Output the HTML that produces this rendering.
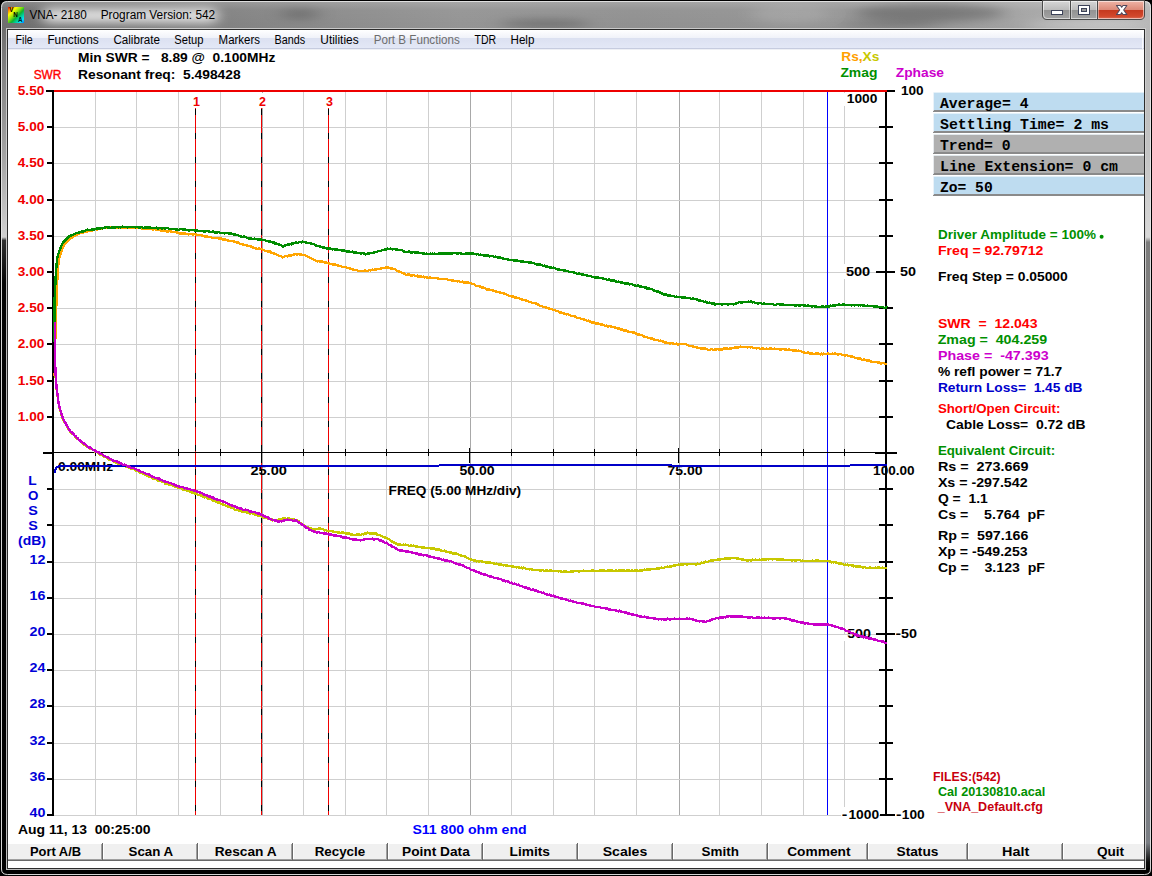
<!DOCTYPE html>
<html lang="en"><head><meta charset="utf-8"><title>VNA- 2180   Program Version: 542</title>
<style>
html,body{margin:0;padding:0;background:#000;}
body{width:1152px;height:876px;overflow:hidden;font-family:"Liberation Sans",Arial,sans-serif;}
svg{display:block}
text{font-family:"Liberation Sans",Arial,sans-serif;white-space:pre;}
.mono{font-family:"Liberation Mono","Courier New",monospace;}
</style></head><body>
<svg width="1152" height="876" viewBox="0 0 1152 876">
<defs>
<linearGradient id="gTitle" x1="0" y1="0" x2="1" y2="0">
<stop offset="0" stop-color="#6e6e6e"/><stop offset="0.10" stop-color="#767676"/><stop offset="0.20" stop-color="#828282"/>
<stop offset="0.30" stop-color="#8c8c8c"/><stop offset="0.40" stop-color="#949494"/><stop offset="0.55" stop-color="#909090"/>
<stop offset="0.70" stop-color="#949494"/><stop offset="0.82" stop-color="#989898"/><stop offset="0.90" stop-color="#a6a6a6"/><stop offset="0.96" stop-color="#b2b2b2"/><stop offset="1" stop-color="#b6b6b6"/>
</linearGradient>
<linearGradient id="gTitleV" x1="0" y1="0" x2="0" y2="1">
<stop offset="0" stop-color="#fff" stop-opacity="0.18"/><stop offset="0.3" stop-color="#fff" stop-opacity="0.04"/><stop offset="1" stop-color="#fff" stop-opacity="0"/>
</linearGradient>
<linearGradient id="gMenu" x1="0" y1="0" x2="0" y2="1">
<stop offset="0" stop-color="#ffffff"/><stop offset="0.40" stop-color="#f0f2f9"/><stop offset="0.42" stop-color="#dce1f1"/><stop offset="0.9" stop-color="#e3e8f6"/><stop offset="0.91" stop-color="#c6ccdf"/><stop offset="0.95" stop-color="#c6ccdf"/><stop offset="0.96" stop-color="#eef0f5"/><stop offset="1" stop-color="#eef0f5"/>
</linearGradient>
<linearGradient id="gIcon" x1="0" y1="0" x2="1" y2="1">
<stop offset="0" stop-color="#ff0000"/><stop offset="0.12" stop-color="#ff8000"/><stop offset="0.27" stop-color="#ffff00"/><stop offset="0.45" stop-color="#80e010"/><stop offset="0.58" stop-color="#10b030"/><stop offset="0.72" stop-color="#00d0a0"/><stop offset="0.86" stop-color="#00e8ff"/><stop offset="1" stop-color="#0070ff"/>
</linearGradient>
<linearGradient id="gBtnT" x1="0" y1="0" x2="0" y2="1">
<stop offset="0" stop-color="#d8d8d8"/><stop offset="0.48" stop-color="#bcbcbc"/><stop offset="0.5" stop-color="#929292"/><stop offset="1" stop-color="#a4a4a4"/>
</linearGradient>
<linearGradient id="gBtnC" x1="0" y1="0" x2="0" y2="1">
<stop offset="0" stop-color="#eeb4a6"/><stop offset="0.48" stop-color="#dc8a78"/><stop offset="0.5" stop-color="#c4381e"/><stop offset="0.85" stop-color="#d2482c"/><stop offset="1" stop-color="#d8705a"/>
</linearGradient>
<linearGradient id="gLeftF" x1="0" y1="0" x2="0" y2="1">
<stop offset="0" stop-color="#6e6e6e"/><stop offset="0.06" stop-color="#868686"/><stop offset="0.15" stop-color="#a4a4a4"/><stop offset="0.246" stop-color="#d0d0d0"/><stop offset="0.250" stop-color="#303030"/><stop offset="0.30" stop-color="#050505"/><stop offset="1" stop-color="#000"/>
</linearGradient>
<linearGradient id="gRightF" x1="0" y1="0" x2="0" y2="1">
<stop offset="0" stop-color="#b6b6b6"/><stop offset="0.15" stop-color="#c4c4c4"/><stop offset="0.246" stop-color="#d8d8d8"/><stop offset="0.252" stop-color="#7c7c7c"/><stop offset="0.6" stop-color="#848484"/><stop offset="0.962" stop-color="#7a7e84"/><stop offset="0.985" stop-color="#0c0c0c"/><stop offset="1" stop-color="#000"/>
</linearGradient>
<filter id="fGlow" x="-20%" y="-150%" width="140%" height="400%"><feGaussianBlur stdDeviation="6.5 5"/></filter>
<filter id="fBlur" x="-30%" y="-100%" width="160%" height="300%"><feGaussianBlur stdDeviation="9 4"/></filter>
<clipPath id="clipPlot"><rect x="53.0" y="90.0" width="834.5" height="726.0"/></clipPath>
</defs>

<rect x="0" y="0" width="1152" height="876" fill="#000"/>
<clipPath id="clipWin"><path d="M1 869 V7 Q1 1 7 1 H1145 Q1151 1 1151 7 V869 Q1151 875 1145 875 H7 Q1 875 1 869 Z"/></clipPath>
<g clip-path="url(#clipWin)">
<rect x="0" y="0" width="1152" height="876" fill="url(#gTitle)"/>
<rect x="2" y="2" width="1148" height="27" fill="url(#gTitleV)"/>
<g filter="url(#fBlur)"><ellipse cx="930" cy="13" rx="75" ry="9" fill="#000" opacity="0.22"/><ellipse cx="545" cy="24" rx="45" ry="4" fill="#000" opacity="0.25"/><ellipse cx="890" cy="25" rx="50" ry="3" fill="#000" opacity="0.22"/><ellipse cx="300" cy="14" rx="20" ry="5" fill="#000" opacity="0.2"/><ellipse cx="1085" cy="25" rx="60" ry="4" fill="#fff" opacity="0.3"/><ellipse cx="790" cy="14" rx="40" ry="10" fill="#fff" opacity="0.12"/></g>
<rect x="1" y="29" width="7" height="846" fill="url(#gLeftF)"/>
<rect x="1144" y="29" width="7" height="846" fill="url(#gRightF)"/>
<rect x="2" y="868" width="1148" height="7" fill="#000"/>
</g>
<path d="M1.5 869 V7.5 Q1.5 1.5 7.5 1.5 H1144.5 Q1150.5 1.5 1150.5 7.5 V869 Q1150.5 874.5 1144.5 874.5 H7.5 Q1.5 874.5 1.5 869 Z" fill="none" stroke="#e6e6e6" stroke-width="1" opacity="0.92"/>
<rect x="6.5" y="28.5" width="1139" height="841" fill="none" stroke="#d0d0d0" stroke-width="1" opacity="0.9"/>
<rect x="7.5" y="29.5" width="1137" height="839" fill="#fff" stroke="#2c2c2c" stroke-width="1"/>
<rect x="8" y="7" width="16" height="16" fill="url(#gIcon)"/>
<text x="9.2" y="12.4" font-size="6.3" font-weight="bold" fill="#000">V</text><text x="13.2" y="17.2" font-size="6.3" font-weight="bold" fill="#000">N</text><text x="18" y="22" font-size="6.3" font-weight="bold" fill="#001828">A</text>
<rect x="42" y="8" width="176" height="15" rx="7" fill="#fff" opacity="0.74" filter="url(#fGlow)"/>
<text y="18.5" font-size="12" fill="#000" xml:space="preserve"><tspan x="29.5" textLength="57.3" lengthAdjust="spacingAndGlyphs">VNA- 2180</tspan><tspan x="100.7" textLength="114.5" lengthAdjust="spacingAndGlyphs">Program Version: 542</tspan></text>
<path d="M1042.5 0.5 H1144.5 V15 Q1144.5 19.5 1140 19.5 H1047 Q1042.5 19.5 1042.5 15 Z" fill="url(#gBtnT)" stroke="#4a4a4a" stroke-width="1"/>
<path d="M1097.5 1 H1144 V15 Q1144 19 1140 19 H1097.5 Z" fill="url(#gBtnC)"/>
<path d="M1043.5 1.5 H1143.5 V15 Q1143.5 18.5 1140 18.5 H1047 Q1043.5 18.5 1043.5 15 Z" fill="none" stroke="#fff" stroke-opacity="0.55" stroke-width="1"/>
<path d="M1070.5 1 V19 M1097.5 1 V19" stroke="#4a4a4a" stroke-width="1"/>
<path d="M1071.5 1.5 V18.5 M1098.5 1.5 V18.5 M1069.5 1.5 V18.5 M1096.5 1.5 V18.5" stroke="#fff" stroke-opacity="0.4" stroke-width="1"/>
<rect x="1051.5" y="10.5" width="11" height="4" fill="#fff" stroke="#3c4258" stroke-width="1"/>
<rect x="1078.5" y="5.5" width="11" height="9" fill="#fff" stroke="#3c4258" stroke-width="1"/><rect x="1081.5" y="8.5" width="5" height="3" fill="#9a9a9a" stroke="#3c4258" stroke-width="1"/>
<path d="M1116.5 5.5 H1120.4 L1121.7 7.3 L1123 5.5 H1126.9 L1123.7 10 L1126.9 14.5 H1123 L1121.7 12.7 L1120.4 14.5 H1116.5 L1119.7 10 Z" fill="#fff" stroke="#50485c" stroke-width="1.1" stroke-linejoin="round"/>
<rect x="8" y="30" width="1136" height="20" fill="url(#gMenu)"/>
<rect x="1142" y="30" width="1" height="19" fill="#fff" opacity="0.8"/>
<text x="15.6" y="43.6" fill="#000" font-size="12" textLength="17.1" lengthAdjust="spacingAndGlyphs" xml:space="preserve">File</text>
<text x="47.4" y="43.6" fill="#000" font-size="12" textLength="51.3" lengthAdjust="spacingAndGlyphs" xml:space="preserve">Functions</text>
<text x="113.4" y="43.6" fill="#000" font-size="12" textLength="46.6" lengthAdjust="spacingAndGlyphs" xml:space="preserve">Calibrate</text>
<text x="174.3" y="43.6" fill="#000" font-size="12" textLength="29.2" lengthAdjust="spacingAndGlyphs" xml:space="preserve">Setup</text>
<text x="218.6" y="43.6" fill="#000" font-size="12" textLength="41.4" lengthAdjust="spacingAndGlyphs" xml:space="preserve">Markers</text>
<text x="274.6" y="43.6" fill="#000" font-size="12" textLength="30.6" lengthAdjust="spacingAndGlyphs" xml:space="preserve">Bands</text>
<text x="320.3" y="43.6" fill="#000" font-size="12" textLength="38.3" lengthAdjust="spacingAndGlyphs" xml:space="preserve">Utilities</text>
<text x="373.7" y="43.6" fill="#6d6d6d" font-size="12" textLength="86.1" lengthAdjust="spacingAndGlyphs" xml:space="preserve">Port B Functions</text>
<text x="474.5" y="43.6" fill="#000" font-size="12" textLength="21.6" lengthAdjust="spacingAndGlyphs" xml:space="preserve">TDR</text>
<text x="510.5" y="43.6" fill="#000" font-size="12" textLength="23.9" lengthAdjust="spacingAndGlyphs" xml:space="preserve">Help</text>
<text x="78.0" y="62.0" fill="#000" font-size="12" font-weight="bold" textLength="197.3" lengthAdjust="spacingAndGlyphs" xml:space="preserve">Min SWR =   8.89 @  0.100MHz</text>
<text x="78.0" y="79.0" fill="#000" font-size="12" font-weight="bold" textLength="162.6" lengthAdjust="spacingAndGlyphs" xml:space="preserve">Resonant freq:  5.498428</text>
<text x="33.7" y="79.0" fill="#f00" font-size="12" textLength="27.7" lengthAdjust="spacingAndGlyphs" xml:space="preserve" stroke="#f00" stroke-width="0.35">SWR</text>
<text x="841.3" y="61" font-size="12" font-weight="bold" textLength="38.1" lengthAdjust="spacingAndGlyphs"><tspan fill="#ffa000">Rs,</tspan><tspan fill="#c8c800">Xs</tspan></text>
<text x="840.4" y="77.0" fill="#009000" font-size="12" font-weight="bold" textLength="37.0" lengthAdjust="spacingAndGlyphs" xml:space="preserve">Zmag</text>
<text x="895.8" y="77.0" fill="#cc00cc" font-size="12" font-weight="bold" textLength="48.2" lengthAdjust="spacingAndGlyphs" xml:space="preserve">Zphase</text>
<g shape-rendering="crispEdges"><path d="M95.5 92.0 V815.0" stroke="#cfcfcf" stroke-width="1"/><path d="M136.5 92.0 V815.0" stroke="#cfcfcf" stroke-width="1"/><path d="M178.5 92.0 V815.0" stroke="#cfcfcf" stroke-width="1"/><path d="M220.5 92.0 V815.0" stroke="#cfcfcf" stroke-width="1"/><path d="M262.5 92.0 V815.0" stroke="#a8a8a8" stroke-width="1"/><path d="M303.5 92.0 V815.0" stroke="#cfcfcf" stroke-width="1"/><path d="M345.5 92.0 V815.0" stroke="#cfcfcf" stroke-width="1"/><path d="M386.5 92.0 V815.0" stroke="#cfcfcf" stroke-width="1"/><path d="M428.5 92.0 V815.0" stroke="#cfcfcf" stroke-width="1"/><path d="M470.5 92.0 V815.0" stroke="#a8a8a8" stroke-width="1"/><path d="M511.5 92.0 V815.0" stroke="#cfcfcf" stroke-width="1"/><path d="M553.5 92.0 V815.0" stroke="#cfcfcf" stroke-width="1"/><path d="M594.5 92.0 V815.0" stroke="#cfcfcf" stroke-width="1"/><path d="M636.5 92.0 V815.0" stroke="#cfcfcf" stroke-width="1"/><path d="M679.5 92.0 V815.0" stroke="#a8a8a8" stroke-width="1"/><path d="M719.5 92.0 V815.0" stroke="#cfcfcf" stroke-width="1"/><path d="M761.5 92.0 V815.0" stroke="#cfcfcf" stroke-width="1"/><path d="M803.5 92.0 V815.0" stroke="#cfcfcf" stroke-width="1"/><path d="M844.5 92.0 V815.0" stroke="#cfcfcf" stroke-width="1"/><rect x="843" y="93" width="36" height="13" fill="#fff"/><rect x="843" y="264" width="30" height="15" fill="#fff"/><rect x="843" y="635" width="30" height="6" fill="#fff"/><path d="M54.0 127.5 H885.0" stroke="#cfcfcf" stroke-width="1"/><path d="M54.0 163.5 H885.0" stroke="#cfcfcf" stroke-width="1"/><path d="M54.0 200.5 H885.0" stroke="#cfcfcf" stroke-width="1"/><path d="M54.0 236.5 H885.0" stroke="#cfcfcf" stroke-width="1"/><path d="M54.0 272.5 H885.0" stroke="#cfcfcf" stroke-width="1"/><path d="M54.0 308.5 H885.0" stroke="#cfcfcf" stroke-width="1"/><path d="M54.0 344.5 H885.0" stroke="#cfcfcf" stroke-width="1"/><path d="M54.0 381.5 H885.0" stroke="#cfcfcf" stroke-width="1"/><path d="M54.0 417.5 H885.0" stroke="#cfcfcf" stroke-width="1"/><path d="M54.0 489.5 H885.0" stroke="#cfcfcf" stroke-width="1"/><path d="M54.0 525.5 H885.0" stroke="#cfcfcf" stroke-width="1"/><path d="M54.0 562.5 H885.0" stroke="#cfcfcf" stroke-width="1"/><path d="M54.0 598.5 H885.0" stroke="#cfcfcf" stroke-width="1"/><path d="M54.0 634.5 H885.0" stroke="#cfcfcf" stroke-width="1"/><path d="M54.0 670.5 H885.0" stroke="#cfcfcf" stroke-width="1"/><path d="M54.0 706.5 H885.0" stroke="#cfcfcf" stroke-width="1"/><path d="M54.0 743.5 H885.0" stroke="#cfcfcf" stroke-width="1"/><path d="M54.0 779.5 H885.0" stroke="#cfcfcf" stroke-width="1"/><path d="M54.0 815.5 H885.0" stroke="#cfcfcf" stroke-width="1"/></g>
<rect x="841" y="807" width="38" height="9" fill="#fff" shape-rendering="crispEdges"/>
<text x="58.1" y="471.0" fill="#000" font-size="12" font-weight="bold" textLength="55.0" lengthAdjust="spacingAndGlyphs" xml:space="preserve">0.00MHz</text>
<text x="250.4" y="475.0" fill="#000" font-size="12" font-weight="bold" textLength="36.5" lengthAdjust="spacingAndGlyphs" xml:space="preserve">25.00</text>
<text x="459.4" y="475.0" fill="#000" font-size="12" font-weight="bold" textLength="35.2" lengthAdjust="spacingAndGlyphs" xml:space="preserve">50.00</text>
<text x="667.5" y="475.0" fill="#000" font-size="12" font-weight="bold" textLength="35.1" lengthAdjust="spacingAndGlyphs" xml:space="preserve">75.00</text>
<text x="873.1" y="475.0" fill="#000" font-size="12" font-weight="bold" textLength="41.5" lengthAdjust="spacingAndGlyphs" xml:space="preserve">100.00</text>
<text x="388.6" y="495.0" fill="#000" font-size="12" font-weight="bold" textLength="132.5" lengthAdjust="spacingAndGlyphs" xml:space="preserve">FREQ (5.00 MHz/div)</text>
<rect x="257" y="93" width="12" height="15" fill="#fff"/>
<g shape-rendering="crispEdges"><path d="M195.5 108 V815.0" stroke="#f00000" stroke-width="1"/><path d="M195.5 109 V815.0" stroke="#000" stroke-width="1" stroke-dasharray="6 18"/><path d="M261.5 108 V815.0" stroke="#f00000" stroke-width="1"/><path d="M261.5 109 V815.0" stroke="#000" stroke-width="1" stroke-dasharray="6 18"/><path d="M328.5 108 V815.0" stroke="#f00000" stroke-width="1"/><path d="M328.5 109 V815.0" stroke="#000" stroke-width="1" stroke-dasharray="6 18"/></g>
<text x="196.5" y="106.0" fill="#f00000" font-size="12.5" font-weight="bold" text-anchor="middle" xml:space="preserve">1</text>
<text x="262.5" y="106.0" fill="#f00000" font-size="12.5" font-weight="bold" text-anchor="middle" xml:space="preserve">2</text>
<text x="329.5" y="106.0" fill="#f00000" font-size="12.5" font-weight="bold" text-anchor="middle" xml:space="preserve">3</text>
<rect x="261" y="451" width="1" height="12" fill="#00e0f0" shape-rendering="crispEdges"/>
<rect x="195" y="452" width="1" height="1" fill="#00e0f0"/><rect x="328" y="452" width="1" height="1" fill="#00e0f0"/>
<rect x="827" y="92" width="1" height="723.0" fill="#0000ff" shape-rendering="crispEdges"/>
<g shape-rendering="crispEdges"><rect x="52" y="90" width="2" height="726.0" fill="#000"/><rect x="885" y="90" width="2" height="726.0" fill="#000"/><rect x="46" y="90" width="8" height="2" fill="#000"/><rect x="887" y="90" width="8" height="2" fill="#000"/><rect x="54" y="90" width="833" height="2" fill="#ee0000"/><rect x="47" y="126" width="6" height="2" fill="#000"/><rect x="47" y="162" width="6" height="2" fill="#000"/><rect x="47" y="199" width="6" height="2" fill="#000"/><rect x="47" y="235" width="6" height="2" fill="#000"/><rect x="47" y="271" width="6" height="2" fill="#000"/><rect x="47" y="307" width="6" height="2" fill="#000"/><rect x="47" y="343" width="6" height="2" fill="#000"/><rect x="47" y="380" width="6" height="2" fill="#000"/><rect x="47" y="416" width="6" height="2" fill="#000"/><rect x="47" y="488" width="6" height="2" fill="#000"/><rect x="47" y="524" width="6" height="2" fill="#000"/><rect x="47" y="561" width="6" height="2" fill="#000"/><rect x="47" y="597" width="6" height="2" fill="#000"/><rect x="47" y="633" width="6" height="2" fill="#000"/><rect x="47" y="669" width="6" height="2" fill="#000"/><rect x="47" y="705" width="6" height="2" fill="#000"/><rect x="47" y="742" width="6" height="2" fill="#000"/><rect x="47" y="778" width="6" height="2" fill="#000"/><rect x="47" y="814" width="6" height="2" fill="#000"/><rect x="879" y="126" width="14" height="2" fill="#000"/><rect x="879" y="162" width="14" height="2" fill="#000"/><rect x="879" y="199" width="14" height="2" fill="#000"/><rect x="879" y="235" width="14" height="2" fill="#000"/><rect x="876" y="271" width="19" height="2" fill="#000"/><rect x="879" y="307" width="14" height="2" fill="#000"/><rect x="879" y="343" width="14" height="2" fill="#000"/><rect x="879" y="380" width="14" height="2" fill="#000"/><rect x="879" y="416" width="14" height="2" fill="#000"/><rect x="879" y="452" width="14" height="2" fill="#000"/><rect x="879" y="488" width="14" height="2" fill="#000"/><rect x="879" y="524" width="14" height="2" fill="#000"/><rect x="879" y="561" width="14" height="2" fill="#000"/><rect x="879" y="597" width="14" height="2" fill="#000"/><rect x="876" y="633" width="19" height="2" fill="#000"/><rect x="879" y="669" width="14" height="2" fill="#000"/><rect x="879" y="705" width="14" height="2" fill="#000"/><rect x="879" y="742" width="14" height="2" fill="#000"/><rect x="879" y="778" width="14" height="2" fill="#000"/><rect x="880" y="814" width="15" height="2" fill="#000"/><rect x="43" y="452" width="854" height="1" fill="#000"/><rect x="43" y="452" width="10" height="2" fill="#000"/><rect x="875" y="452" width="22" height="2" fill="#000"/><rect x="95" y="449" width="1" height="7" fill="#000"/><rect x="136" y="449" width="1" height="7" fill="#000"/><rect x="178" y="449" width="1" height="7" fill="#000"/><rect x="220" y="449" width="1" height="7" fill="#000"/><rect x="261" y="448" width="1" height="15" fill="#000"/><rect x="303" y="449" width="1" height="7" fill="#000"/><rect x="345" y="449" width="1" height="7" fill="#000"/><rect x="386" y="449" width="1" height="7" fill="#000"/><rect x="428" y="449" width="1" height="7" fill="#000"/><rect x="469" y="448" width="1" height="15" fill="#000"/><rect x="511" y="449" width="1" height="7" fill="#000"/><rect x="553" y="449" width="1" height="7" fill="#000"/><rect x="594" y="449" width="1" height="7" fill="#000"/><rect x="636" y="449" width="1" height="7" fill="#000"/><rect x="678" y="448" width="1" height="15" fill="#000"/><rect x="719" y="449" width="1" height="7" fill="#000"/><rect x="761" y="449" width="1" height="7" fill="#000"/><rect x="803" y="449" width="1" height="7" fill="#000"/><rect x="844" y="449" width="1" height="7" fill="#000"/></g>
<text x="17.8" y="95.0" fill="#f00000" font-size="12" font-weight="bold" textLength="26.5" lengthAdjust="spacingAndGlyphs" xml:space="preserve">5.50</text>
<text x="17.8" y="131.0" fill="#f00000" font-size="12" font-weight="bold" textLength="26.5" lengthAdjust="spacingAndGlyphs" xml:space="preserve">5.00</text>
<text x="17.8" y="167.0" fill="#f00000" font-size="12" font-weight="bold" textLength="26.5" lengthAdjust="spacingAndGlyphs" xml:space="preserve">4.50</text>
<text x="17.8" y="204.0" fill="#f00000" font-size="12" font-weight="bold" textLength="26.5" lengthAdjust="spacingAndGlyphs" xml:space="preserve">4.00</text>
<text x="17.8" y="240.0" fill="#f00000" font-size="12" font-weight="bold" textLength="26.5" lengthAdjust="spacingAndGlyphs" xml:space="preserve">3.50</text>
<text x="17.8" y="276.0" fill="#f00000" font-size="12" font-weight="bold" textLength="26.5" lengthAdjust="spacingAndGlyphs" xml:space="preserve">3.00</text>
<text x="17.8" y="312.0" fill="#f00000" font-size="12" font-weight="bold" textLength="26.5" lengthAdjust="spacingAndGlyphs" xml:space="preserve">2.50</text>
<text x="17.8" y="348.0" fill="#f00000" font-size="12" font-weight="bold" textLength="26.5" lengthAdjust="spacingAndGlyphs" xml:space="preserve">2.00</text>
<text x="17.8" y="385.0" fill="#f00000" font-size="12" font-weight="bold" textLength="26.5" lengthAdjust="spacingAndGlyphs" xml:space="preserve">1.50</text>
<text x="17.8" y="421.0" fill="#f00000" font-size="12" font-weight="bold" textLength="26.5" lengthAdjust="spacingAndGlyphs" xml:space="preserve">1.00</text>
<text x="29.6" y="564.0" fill="#0000d8" font-size="12" font-weight="bold" textLength="15.9" lengthAdjust="spacingAndGlyphs" xml:space="preserve">12</text>
<text x="29.6" y="600.0" fill="#0000d8" font-size="12" font-weight="bold" textLength="15.9" lengthAdjust="spacingAndGlyphs" xml:space="preserve">16</text>
<text x="29.6" y="636.0" fill="#0000d8" font-size="12" font-weight="bold" textLength="15.9" lengthAdjust="spacingAndGlyphs" xml:space="preserve">20</text>
<text x="29.6" y="672.0" fill="#0000d8" font-size="12" font-weight="bold" textLength="15.9" lengthAdjust="spacingAndGlyphs" xml:space="preserve">24</text>
<text x="29.6" y="708.0" fill="#0000d8" font-size="12" font-weight="bold" textLength="15.9" lengthAdjust="spacingAndGlyphs" xml:space="preserve">28</text>
<text x="29.6" y="745.0" fill="#0000d8" font-size="12" font-weight="bold" textLength="15.9" lengthAdjust="spacingAndGlyphs" xml:space="preserve">32</text>
<text x="29.6" y="781.0" fill="#0000d8" font-size="12" font-weight="bold" textLength="15.9" lengthAdjust="spacingAndGlyphs" xml:space="preserve">36</text>
<text x="29.6" y="817.0" fill="#0000d8" font-size="12" font-weight="bold" textLength="15.9" lengthAdjust="spacingAndGlyphs" xml:space="preserve">40</text>
<text x="28.3" y="485.0" fill="#0000d8" font-size="12" font-weight="bold" textLength="8.4" lengthAdjust="spacingAndGlyphs" xml:space="preserve">L</text>
<text x="27.9" y="500.0" fill="#0000d8" font-size="12" font-weight="bold" textLength="10.4" lengthAdjust="spacingAndGlyphs" xml:space="preserve">O</text>
<text x="28.2" y="515.0" fill="#0000d8" font-size="12" font-weight="bold" textLength="9.6" lengthAdjust="spacingAndGlyphs" xml:space="preserve">S</text>
<text x="28.2" y="530.0" fill="#0000d8" font-size="12" font-weight="bold" textLength="9.6" lengthAdjust="spacingAndGlyphs" xml:space="preserve">S</text>
<text x="18.0" y="545.0" fill="#0000d8" font-size="12" font-weight="bold" textLength="27.9" lengthAdjust="spacingAndGlyphs" xml:space="preserve">(dB)</text>
<text x="846.8" y="103.0" fill="#000" font-size="12" font-weight="bold" textLength="30.6" lengthAdjust="spacingAndGlyphs" xml:space="preserve">1000</text>
<text x="845.9" y="276.0" fill="#000" font-size="12" font-weight="bold" textLength="24.3" lengthAdjust="spacingAndGlyphs" xml:space="preserve">500</text>
<text x="847.2" y="638.0" fill="#000" font-size="12" font-weight="bold" textLength="23.8" lengthAdjust="spacingAndGlyphs" xml:space="preserve">500</text>
<text y="819" font-size="12" font-weight="bold" fill="#000"><tspan x="841.7" textLength="5.6" lengthAdjust="spacingAndGlyphs">-</tspan><tspan x="848.4" textLength="30.7" lengthAdjust="spacingAndGlyphs">1000</tspan></text>
<text x="900.9" y="95.0" fill="#000" font-size="12" font-weight="bold" textLength="22.7" lengthAdjust="spacingAndGlyphs" xml:space="preserve">100</text>
<text x="899.9" y="276.0" fill="#000" font-size="12" font-weight="bold" textLength="16.0" lengthAdjust="spacingAndGlyphs" xml:space="preserve">50</text>
<text y="638" font-size="12" font-weight="bold" fill="#000"><tspan x="895.6" textLength="5.5" lengthAdjust="spacingAndGlyphs">-</tspan><tspan x="901.0" textLength="16.0" lengthAdjust="spacingAndGlyphs">50</tspan></text>
<text y="819" font-size="12" font-weight="bold" fill="#000"><tspan x="895.9" textLength="5.5" lengthAdjust="spacingAndGlyphs">-</tspan><tspan x="901.8" textLength="22.9" lengthAdjust="spacingAndGlyphs">100</tspan></text>
<polyline points="54.6,376.0 54.7,373.0 54.7,370.0 54.8,367.0 54.8,364.0 54.9,361.0 55.0,358.0 55.0,355.0 55.1,352.0 55.1,349.0 55.2,346.0 55.2,343.0 55.3,340.0 55.4,336.9 55.5,333.8 55.6,330.8 55.7,327.7 55.8,324.6 55.9,321.5 55.9,318.5 56.0,315.4 56.1,312.3 56.2,309.2 56.3,306.2 56.4,303.1 56.5,300.0 56.6,296.9 56.7,293.8 56.9,290.7 57.0,287.6 57.1,284.4 57.2,281.3 57.4,278.2 57.5,275.1 57.6,272.0 58.0,268.6 58.3,265.2 58.6,261.9 59.0,258.5 59.9,255.8 60.9,253.0 61.8,250.3 62.7,248.3 63.7,246.3 64.6,244.3 65.6,243.3 66.5,242.3 67.5,241.2 68.5,240.2 69.4,239.2 70.4,238.0 71.4,237.4 72.3,237.4 73.2,236.3 74.2,236.3 75.2,235.7 76.1,234.9 77.0,234.9 78.0,233.9 79.0,234.0 79.9,233.3 80.8,233.0 81.8,233.0 82.8,233.1 83.7,232.1 84.7,231.9 85.6,232.0 86.5,232.0 87.5,231.3 88.6,230.9 89.6,231.2 90.7,230.0 91.8,230.6 92.8,229.8 93.9,229.4 94.9,229.2 96.0,229.1 97.0,229.5 98.0,228.7 99.0,229.0 100.0,229.0 101.0,228.6 102.0,228.6 103.0,228.0 104.0,227.9 105.0,227.9 106.0,228.3 107.0,227.9 108.0,227.8 109.0,228.0 110.0,227.8 111.0,227.6 112.0,228.1 113.0,228.0 114.0,227.5 115.0,227.8 116.0,227.7 117.0,228.0 118.0,227.8 119.0,227.3 120.0,228.0 121.0,227.1 122.0,227.5 123.0,227.8 124.0,227.2 125.0,227.6 126.0,227.2 127.0,227.8 128.0,227.9 129.0,227.7 130.0,228.1 131.0,227.5 132.0,227.9 133.0,227.8 134.0,227.8 135.0,227.7 136.0,228.1 137.0,228.3 138.0,227.9 139.0,228.2 140.0,227.7 141.0,228.4 142.0,228.4 143.0,228.9 144.0,228.8 145.0,228.3 146.0,228.5 147.0,228.8 148.0,228.3 149.0,228.8 150.0,228.6 151.0,228.6 152.0,228.7 153.0,229.5 154.0,229.0 155.0,229.3 156.0,229.6 157.0,230.2 158.0,229.5 159.0,230.0 160.0,230.2 161.0,230.7 162.0,230.8 163.0,231.0 164.0,230.5 165.0,230.8 166.0,230.9 167.0,231.5 167.9,231.8 168.9,231.1 169.9,231.3 170.9,231.5 171.8,231.6 172.8,232.0 173.8,232.3 174.8,232.1 175.8,232.0 176.7,232.6 177.7,232.7 178.7,233.0 179.7,233.5 180.8,233.3 181.8,233.3 182.8,233.5 183.8,233.6 184.8,233.1 185.8,234.1 186.9,234.1 187.9,234.3 188.9,234.3 189.9,234.0 190.9,234.2 191.9,234.0 193.0,234.6 194.0,234.2 195.0,234.3 196.0,234.6 197.0,234.7 198.0,235.0 199.0,234.9 199.9,235.0 200.9,235.3 201.9,235.4 202.9,235.9 203.9,235.7 204.9,236.7 205.9,236.6 206.9,236.3 207.8,236.6 208.8,236.8 209.8,237.0 210.8,236.9 211.8,237.8 212.8,238.1 213.8,237.7 214.8,237.9 215.8,237.7 216.7,237.9 217.7,238.3 218.7,238.3 219.7,239.1 220.7,238.6 221.7,238.6 222.7,239.8 223.8,239.5 224.8,239.4 225.8,240.0 226.8,239.7 227.8,240.4 228.9,241.0 229.9,241.1 230.9,241.2 231.9,240.9 233.0,241.3 234.0,241.3 235.0,242.1 236.0,242.1 237.0,242.7 238.0,242.6 239.0,242.8 240.0,243.7 241.0,244.2 242.0,244.3 243.0,244.6 244.0,244.9 245.0,245.2 246.0,245.0 247.0,245.6 248.0,245.7 249.0,245.7 250.0,246.0 251.0,246.5 251.9,246.7 252.9,247.4 253.9,247.9 254.9,247.7 255.8,248.4 256.8,248.7 257.8,248.9 258.8,248.5 259.8,248.6 260.7,248.9 261.7,249.1 262.7,249.4 263.8,250.2 264.8,250.8 265.8,251.0 266.8,251.0 267.9,251.5 268.9,251.9 269.9,251.5 270.9,252.4 272.0,253.0 273.0,253.2 274.0,253.6 274.9,253.7 275.9,253.8 276.8,254.9 277.8,254.8 278.8,255.7 279.7,256.3 280.7,256.2 281.6,256.6 282.6,257.5 283.6,257.1 284.5,256.3 285.5,256.0 286.4,255.8 287.4,256.4 288.4,256.0 289.3,255.1 290.3,255.6 291.2,255.5 292.2,255.0 293.2,254.5 294.1,254.6 295.1,254.0 296.0,253.7 297.0,254.6 297.9,254.1 298.9,253.8 299.9,254.5 300.8,254.3 301.8,255.0 302.7,255.2 303.7,254.9 304.6,255.2 305.6,255.5 306.6,256.0 307.7,256.8 308.7,257.0 309.8,257.7 310.8,257.9 311.9,259.2 312.9,259.1 314.0,259.7 315.0,260.4 316.0,260.9 316.9,260.7 317.9,261.4 318.9,261.2 319.8,261.4 320.8,261.7 321.8,261.4 322.7,262.0 323.7,262.0 324.6,262.0 325.6,263.0 326.6,262.6 327.5,263.2 328.5,263.6 329.5,263.7 330.5,263.7 331.5,264.1 332.5,264.3 333.6,264.8 334.6,264.3 335.6,265.0 336.6,264.9 337.6,265.2 338.6,265.9 339.6,265.9 340.6,266.1 341.7,266.6 342.7,266.9 343.7,266.7 344.7,267.1 345.7,267.2 346.7,267.5 347.7,268.0 348.8,268.0 349.8,268.4 350.8,268.6 351.8,269.3 352.8,269.4 353.9,269.8 354.9,270.2 355.9,269.8 356.9,270.3 357.9,271.0 359.0,271.2 360.0,270.8 361.0,271.0 362.0,271.2 363.1,270.7 364.1,270.7 365.1,270.4 366.2,270.9 367.2,270.9 368.3,270.8 369.3,270.0 370.3,270.4 371.4,270.2 372.4,269.5 373.4,270.1 374.4,270.0 375.5,269.1 376.5,269.7 377.5,269.0 378.5,268.9 379.5,269.2 380.6,268.9 381.6,268.1 382.6,268.2 383.6,268.1 384.7,267.8 385.7,267.5 386.7,267.4 387.7,268.0 388.6,267.5 389.6,268.3 390.5,268.4 391.5,268.2 392.4,268.7 393.4,269.2 394.3,269.3 395.3,269.1 396.3,270.5 397.2,270.7 398.2,271.4 399.1,271.0 400.1,271.7 401.1,271.9 402.0,273.1 403.0,273.1 403.9,273.4 404.9,274.2 405.9,274.9 406.9,274.9 408.0,274.5 409.0,274.5 410.0,275.4 411.0,275.2 412.1,275.5 413.1,275.1 414.1,275.2 415.1,275.9 416.2,275.8 417.2,275.6 418.2,276.6 419.2,276.5 420.3,276.8 421.3,276.2 422.3,277.1 423.4,276.5 424.4,277.4 425.4,277.2 426.4,277.2 427.5,277.6 428.5,278.1 429.5,277.6 430.6,277.6 431.6,278.1 432.6,277.9 433.7,277.9 434.7,278.1 435.7,278.1 436.8,278.3 437.8,278.5 438.8,278.6 439.8,279.2 440.9,278.8 441.9,279.1 442.9,278.9 444.0,279.1 445.0,278.9 446.0,279.3 447.0,279.2 448.1,280.1 449.1,280.0 450.1,279.8 451.1,280.2 452.1,280.8 453.2,280.1 454.2,281.0 455.2,280.7 456.2,280.9 457.2,281.4 458.3,281.1 459.3,281.4 460.3,281.7 461.3,282.2 462.4,281.7 463.4,282.4 464.5,282.5 465.5,282.6 466.5,282.5 467.6,282.7 468.6,282.6 469.7,282.8 470.7,283.0 471.7,284.0 472.8,283.9 473.8,284.2 474.8,284.5 475.9,285.6 476.9,286.0 477.9,286.2 479.0,286.2 480.0,286.5 481.0,286.9 482.1,287.5 483.1,287.6 484.1,288.1 485.1,288.2 486.1,289.2 487.0,289.5 488.0,289.4 489.0,289.4 490.0,290.4 491.0,290.0 492.0,290.3 493.0,290.3 493.9,290.9 494.9,291.3 495.9,291.6 496.9,291.6 497.9,292.2 498.9,292.0 499.9,292.5 500.9,292.6 501.8,293.2 502.8,293.2 503.8,293.4 504.8,294.0 505.8,294.2 506.8,294.9 507.8,295.1 508.7,295.6 509.7,295.8 510.7,296.1 511.7,296.6 512.7,296.4 513.7,296.6 514.7,297.6 515.7,297.0 516.7,297.9 517.7,298.1 518.7,297.8 519.7,298.9 520.7,299.3 521.8,299.3 522.8,299.7 523.8,300.1 524.8,299.7 525.8,300.4 526.8,300.7 527.8,301.3 528.8,301.6 529.8,301.9 530.8,302.0 531.8,302.7 532.7,302.8 533.7,303.2 534.6,303.1 535.6,303.3 536.6,303.8 537.5,304.4 538.5,304.5 539.4,305.7 540.4,305.8 541.4,306.2 542.5,306.5 543.5,306.9 544.5,307.0 545.6,306.9 546.6,308.0 547.6,308.3 548.6,308.4 549.7,308.8 550.7,309.2 551.7,309.0 552.8,310.0 553.8,309.9 554.8,310.0 555.8,310.5 556.8,311.3 557.8,311.1 558.8,311.9 559.8,312.5 560.8,312.3 561.8,312.6 562.8,313.0 563.9,313.5 564.9,313.9 565.9,314.1 566.9,314.4 567.9,314.2 568.9,314.6 569.9,315.0 570.9,315.8 571.9,315.7 572.9,316.3 573.9,316.0 574.9,316.4 575.9,316.9 576.9,317.6 577.9,317.9 578.9,318.2 579.9,318.1 580.9,318.7 581.9,318.9 582.9,319.2 583.8,319.2 584.8,320.2 585.8,319.9 586.8,320.9 587.8,321.2 588.8,320.6 589.8,321.3 590.8,322.0 591.8,322.5 592.8,322.2 593.8,322.4 594.8,322.6 595.8,323.6 596.8,323.1 597.8,323.7 598.8,323.5 599.8,324.1 600.8,324.8 601.8,324.2 602.8,325.1 603.8,325.1 604.8,325.7 605.8,325.8 606.8,325.5 607.8,326.4 608.8,326.3 609.8,326.0 610.8,326.3 611.8,327.0 612.8,327.2 613.8,327.3 614.8,327.4 615.8,327.8 616.8,328.0 617.8,328.8 618.8,328.3 619.8,329.3 620.8,329.7 621.8,329.2 622.8,330.3 623.8,330.4 624.8,330.8 625.8,330.5 626.8,330.9 627.8,331.2 628.8,332.1 629.8,331.9 630.8,332.0 631.8,332.3 632.8,332.5 633.8,332.5 634.8,332.8 635.8,333.9 636.8,333.6 637.8,334.6 638.8,334.2 639.8,334.5 640.8,335.1 641.9,335.1 642.9,335.6 643.9,336.6 644.9,336.8 645.9,337.1 646.9,337.2 647.9,337.8 648.9,338.2 649.9,338.1 651.0,338.6 652.0,338.3 653.0,339.3 654.0,339.3 655.0,340.0 656.0,340.1 657.0,340.0 658.1,340.0 659.1,341.1 660.1,340.6 661.1,341.2 662.1,341.3 663.2,341.5 664.2,342.2 665.2,342.7 666.2,342.2 667.2,342.9 668.3,342.8 669.3,343.3 670.3,343.4 671.3,343.2 672.3,343.3 673.3,343.4 674.4,344.2 675.4,343.8 676.4,343.6 677.4,344.4 678.4,344.5 679.4,344.0 680.4,343.8 681.4,343.9 682.5,343.9 683.5,344.2 684.5,344.0 685.5,344.2 686.5,344.5 687.5,345.1 688.6,345.7 689.6,345.9 690.6,345.8 691.6,346.1 692.7,346.5 693.7,346.6 694.7,346.8 695.7,346.8 696.8,347.3 697.8,348.3 698.8,347.7 699.8,348.2 700.9,348.5 701.9,348.8 702.9,348.3 704.0,348.5 705.0,348.6 706.0,348.9 707.0,349.0 708.1,349.7 709.1,349.7 710.1,349.8 711.2,349.1 712.2,349.2 713.2,349.8 714.2,349.9 715.3,349.4 716.3,349.5 717.3,348.8 718.3,349.1 719.3,349.6 720.4,349.4 721.4,349.3 722.4,349.4 723.4,348.6 724.4,348.3 725.5,348.3 726.5,348.6 727.5,348.7 728.5,348.8 729.5,348.5 730.6,348.3 731.6,348.3 732.6,347.9 733.6,347.9 734.7,347.2 735.7,347.9 736.7,347.2 737.7,347.8 738.8,347.4 739.8,346.9 740.8,346.6 741.8,346.8 742.7,347.2 743.7,347.3 744.6,346.8 745.6,346.8 746.6,347.3 747.5,347.4 748.5,347.2 749.4,347.1 750.4,347.5 751.4,347.0 752.3,347.4 753.3,347.7 754.2,348.3 755.2,348.1 756.1,348.4 757.1,348.1 758.1,348.0 759.0,348.1 760.0,348.9 760.9,348.8 761.9,348.5 762.9,348.2 763.9,348.7 764.9,348.9 765.9,348.7 766.9,348.6 767.9,349.0 768.9,349.3 769.9,348.6 770.9,348.4 771.9,348.7 772.9,348.8 773.9,349.1 774.9,348.6 775.9,349.3 776.9,349.2 777.9,349.0 778.9,348.7 779.9,349.5 780.9,348.9 781.9,349.4 782.9,348.8 783.9,348.9 784.9,349.6 785.9,349.3 787.0,350.1 788.0,349.7 789.0,349.5 790.0,349.7 791.0,350.0 792.0,350.4 793.0,350.8 794.0,350.1 795.1,350.5 796.1,350.5 797.1,351.3 798.1,350.6 799.1,350.7 800.1,350.9 801.2,351.5 802.2,352.2 803.2,352.4 804.2,352.4 805.2,352.9 806.3,353.0 807.3,352.6 808.3,352.6 809.3,353.6 810.3,353.6 811.4,353.0 812.4,353.9 813.4,353.8 814.4,353.8 815.4,353.7 816.4,353.6 817.4,353.4 818.4,353.7 819.4,353.8 820.4,354.4 821.4,353.5 822.4,354.4 823.4,353.6 824.4,353.8 825.3,354.2 826.3,354.2 827.3,353.8 828.3,353.4 829.3,353.9 830.3,353.8 831.3,354.3 832.3,353.6 833.3,353.8 834.3,354.3 835.3,353.4 836.3,353.8 837.3,354.3 838.2,354.4 839.2,353.8 840.1,354.0 841.1,354.1 842.1,355.1 843.0,354.6 844.0,355.2 844.9,355.5 845.9,355.0 846.9,355.2 847.9,356.2 848.9,356.1 849.9,356.0 850.9,356.7 851.9,356.5 852.9,356.7 853.9,356.7 854.9,357.7 856.0,358.1 857.0,358.1 858.0,358.7 859.0,358.0 860.0,358.5 861.0,359.0 862.0,359.7 863.0,359.9 864.0,359.6 865.0,359.8 866.0,360.1 867.0,360.4 868.0,361.0 869.0,360.5 870.0,361.3 871.0,361.4 872.0,361.7 873.0,361.9 874.0,361.9 875.0,361.8 876.0,362.0 877.0,362.3 878.0,362.9 879.0,362.4 880.0,362.7 881.0,363.5 882.0,363.1 883.0,363.2 884.0,363.3 885.0,364.1 886.0,364.0 887.0,364.4" fill="none" stroke="#ffa500" stroke-width="2.4" stroke-linejoin="round" shape-rendering="crispEdges"/>
<polyline points="54.6,330.0 54.6,333.1 54.6,336.1 54.6,339.2 54.7,342.3 54.7,345.3 54.7,348.4 54.7,351.5 54.7,354.5 54.7,357.6 54.7,360.7 54.7,363.7 54.8,366.8 54.8,369.9 54.8,372.9 54.8,376.0 55.3,372.0 55.5,374.8 55.7,377.7 56.0,380.5 56.2,383.3 56.4,386.2 56.6,389.0 57.0,391.9 57.4,394.8 57.8,397.8 58.2,400.7 58.6,403.6 59.0,406.5 60.0,409.6 60.9,412.8 61.8,415.9 62.8,419.0 63.8,420.8 64.9,422.7 65.9,424.5 67.0,426.3 68.0,428.2 69.1,430.0 70.0,431.5 71.0,432.5 72.0,433.6 72.9,433.9 73.8,434.8 74.8,435.8 75.8,437.3 76.7,438.5 77.7,439.1 78.7,439.7 79.7,440.7 80.7,441.7 81.7,442.6 82.7,443.5 83.7,444.4 84.7,445.0 85.7,445.3 86.7,446.8 87.7,446.8 88.7,447.7 89.6,448.0 90.6,449.0 91.6,449.0 92.6,449.6 93.5,450.1 94.5,450.6 95.5,451.9 96.5,452.2 97.6,452.5 98.6,453.2 99.6,454.4 100.6,454.5 101.7,454.8 102.7,455.9 103.7,456.4 104.7,457.3 105.8,457.0 106.8,458.0 107.8,458.8 108.7,459.3 109.7,459.8 110.7,459.4 111.6,460.1 112.6,460.4 113.6,460.9 114.6,462.2 115.5,462.2 116.5,463.0 117.5,462.9 118.4,463.9 119.4,463.9 120.4,464.1 121.4,465.1 122.3,465.6 123.3,465.2 124.3,466.0 125.3,466.5 126.2,466.4 127.2,467.0 128.2,467.1 129.2,467.6 130.2,468.0 131.1,468.8 132.1,469.2 133.1,469.1 134.1,469.3 135.0,470.0 136.0,470.8 137.0,470.7 138.0,471.3 139.0,471.7 140.0,472.8 141.0,473.0 142.0,473.0 143.0,473.5 144.0,474.3 145.0,474.9 146.0,475.4 147.0,475.3 148.0,475.8 149.0,476.7 150.0,476.9 151.0,477.2 152.0,477.6 153.0,478.7 154.1,478.5 155.1,479.2 156.1,479.4 157.1,479.9 158.1,480.7 159.1,481.3 160.1,481.1 161.1,481.3 162.1,482.3 163.1,482.2 164.1,482.3 165.1,483.6 166.2,483.4 167.2,484.2 168.2,484.1 169.2,484.9 170.2,484.8 171.3,484.9 172.3,485.1 173.3,486.0 174.3,486.4 175.3,487.0 176.4,486.5 177.4,487.4 178.4,487.5 179.4,488.0 180.4,487.9 181.4,488.4 182.4,489.0 183.5,489.8 184.5,489.3 185.5,490.0 186.5,490.7 187.5,491.2 188.5,490.8 189.5,491.0 190.5,492.2 191.6,492.6 192.6,492.4 193.6,492.4 194.6,493.6 195.6,493.4 196.6,494.3 197.6,494.4 198.6,495.0 199.6,494.8 200.6,495.8 201.6,495.6 202.5,496.2 203.5,497.0 204.5,497.4 205.5,497.2 206.5,497.6 207.5,498.2 208.5,498.7 209.5,499.0 210.5,499.1 211.5,499.6 212.5,500.5 213.5,501.1 214.4,500.6 215.4,501.6 216.4,502.2 217.4,501.8 218.4,503.0 219.4,502.7 220.4,503.6 221.4,504.0 222.4,504.4 223.4,504.5 224.4,505.0 225.4,505.6 226.4,505.8 227.4,506.5 228.4,506.6 229.4,507.0 230.5,507.0 231.5,508.0 232.5,508.3 233.5,508.4 234.5,509.4 235.5,509.8 236.5,509.9 237.5,510.0 238.5,510.7 239.5,510.7 240.5,510.9 241.5,511.4 242.5,511.3 243.5,511.9 244.6,512.1 245.6,511.9 246.6,512.7 247.6,512.3 248.6,513.2 249.6,513.4 250.6,513.4 251.6,513.1 252.7,513.8 253.7,513.9 254.7,514.6 255.7,514.0 256.7,515.0 257.7,515.4 258.7,515.5 259.7,515.9 260.7,515.6 261.8,516.8 262.8,516.6 263.8,517.4 264.8,517.7 265.8,517.3 266.8,518.2 267.8,518.7 268.8,518.2 269.9,518.8 270.9,519.6 271.9,519.3 272.9,520.4 273.9,520.1 274.9,520.5 275.9,519.7 277.0,519.9 278.0,520.1 279.0,519.3 280.0,519.2 281.1,519.3 282.1,518.9 283.1,518.5 284.1,518.5 285.2,518.4 286.2,519.0 287.2,518.6 288.2,519.0 289.1,518.4 290.1,519.2 291.0,518.7 292.0,519.3 293.0,519.6 293.9,519.4 294.9,520.1 295.8,520.0 296.8,520.2 297.8,521.2 298.7,521.2 299.6,522.8 300.6,523.2 301.6,523.7 302.5,524.8 303.4,525.0 304.4,526.5 305.4,526.5 306.3,526.7 307.3,527.5 308.2,527.6 309.2,527.7 310.2,528.7 311.1,528.4 312.1,529.6 313.1,529.0 314.0,529.4 315.0,529.7 315.9,529.2 316.9,529.3 317.8,528.9 318.8,528.5 319.7,528.5 320.7,528.6 321.6,529.0 322.6,529.2 323.5,529.6 324.5,530.3 325.4,529.8 326.4,530.3 327.3,531.0 328.3,530.7 329.3,530.8 330.3,531.3 331.3,531.2 332.4,531.5 333.4,531.5 334.4,532.0 335.4,532.1 336.4,531.9 337.4,532.4 338.4,532.4 339.4,532.1 340.4,533.1 341.5,532.5 342.5,532.5 343.5,532.6 344.5,533.2 345.5,533.6 346.4,533.7 347.4,533.5 348.3,533.5 349.3,533.5 350.3,534.3 351.2,534.4 352.2,534.3 353.1,534.8 354.1,534.7 355.0,535.2 356.0,535.0 356.9,534.5 357.9,535.2 358.8,534.3 359.7,534.8 360.7,534.7 361.6,534.5 362.6,534.1 363.5,534.5 364.5,533.4 365.5,533.7 366.4,533.7 367.4,532.6 368.3,532.8 369.3,533.3 370.2,533.3 371.2,533.5 372.1,533.8 373.1,533.3 374.0,533.5 375.0,533.6 375.9,533.4 376.9,534.4 377.9,534.7 378.8,535.1 379.8,534.8 380.7,536.0 381.7,536.3 382.7,536.5 383.6,537.2 384.6,537.3 385.5,537.5 386.5,537.8 387.5,538.5 388.6,538.9 389.6,539.8 390.6,540.7 391.7,541.3 392.7,542.0 393.8,542.4 394.8,542.5 395.8,543.4 396.9,543.9 397.9,544.8 398.9,544.6 400.0,544.4 401.0,544.9 402.0,545.3 403.1,544.6 404.1,545.3 405.1,544.6 406.1,544.9 407.2,544.9 408.2,545.5 409.2,545.8 410.3,545.7 411.3,545.3 412.3,546.0 413.3,545.6 414.3,545.7 415.3,546.5 416.3,546.4 417.3,546.6 418.3,546.7 419.3,547.2 420.3,546.8 421.4,547.3 422.4,547.3 423.4,547.6 424.4,547.4 425.4,547.8 426.4,547.8 427.4,547.7 428.4,547.7 429.4,548.3 430.4,547.9 431.4,548.9 432.4,548.3 433.4,548.4 434.4,548.7 435.4,549.7 436.4,549.3 437.4,549.3 438.4,549.4 439.4,549.6 440.5,550.5 441.5,550.6 442.5,550.9 443.5,551.1 444.5,550.7 445.5,551.4 446.5,551.4 447.5,552.0 448.5,552.2 449.5,552.5 450.5,552.0 451.6,553.0 452.6,553.4 453.6,553.7 454.7,553.1 455.7,553.5 456.7,553.7 457.7,553.9 458.8,555.0 459.8,555.3 460.8,555.4 461.9,555.8 462.9,555.9 463.9,556.1 464.8,556.4 465.8,556.9 466.7,558.0 467.7,557.9 468.6,558.6 469.6,559.1 470.5,559.2 471.5,560.0 472.5,560.1 473.5,560.7 474.5,560.5 475.6,560.6 476.6,561.4 477.6,561.1 478.6,561.6 479.6,561.5 480.6,561.0 481.6,561.6 482.6,561.7 483.6,562.2 484.7,561.9 485.7,562.4 486.7,562.4 487.7,562.2 488.7,563.0 489.7,562.4 490.7,563.3 491.7,562.8 492.7,562.8 493.7,563.2 494.6,563.9 495.6,564.3 496.6,563.4 497.6,564.1 498.6,564.3 499.6,564.7 500.6,564.3 501.6,564.7 502.6,564.7 503.6,565.4 504.6,565.0 505.6,565.8 506.5,565.3 507.5,565.4 508.5,566.1 509.5,566.0 510.5,565.8 511.5,566.5 512.5,566.1 513.5,566.9 514.5,567.0 515.5,567.3 516.5,567.3 517.5,567.1 518.5,567.3 519.5,567.5 520.5,568.1 521.5,567.5 522.5,568.5 523.5,567.7 524.4,568.1 525.4,568.3 526.4,569.1 527.4,568.8 528.4,568.9 529.4,569.5 530.4,569.1 531.4,569.4 532.4,569.7 533.4,570.0 534.4,570.2 535.4,570.2 536.4,570.0 537.4,570.0 538.4,569.9 539.4,570.6 540.4,570.5 541.4,570.6 542.4,570.1 543.4,570.4 544.4,570.8 545.5,570.7 546.5,570.2 547.5,570.6 548.5,571.1 549.5,570.5 550.5,570.5 551.5,570.7 552.5,571.1 553.5,571.3 554.5,570.7 555.5,570.7 556.4,570.9 557.4,571.1 558.3,571.4 559.2,571.1 560.2,571.4 561.1,571.3 562.1,572.2 563.0,572.0 564.0,571.5 565.0,572.3 566.0,571.4 567.0,571.7 567.9,572.2 568.9,572.0 569.9,571.9 570.9,571.5 571.9,571.3 572.9,571.7 573.9,571.1 574.9,571.1 575.8,571.3 576.8,570.9 577.8,571.2 578.8,571.6 579.8,571.4 580.8,571.2 581.8,571.3 582.8,571.1 583.7,570.7 584.7,571.1 585.7,570.9 586.7,571.2 587.7,571.3 588.7,570.8 589.7,570.9 590.7,571.0 591.6,570.6 592.6,570.4 593.6,570.9 594.6,571.0 595.6,570.9 596.6,570.8 597.6,571.0 598.6,570.8 599.6,570.7 600.6,570.6 601.6,570.4 602.6,570.7 603.6,570.2 604.6,570.5 605.6,570.9 606.5,570.8 607.5,570.7 608.5,570.4 609.5,570.5 610.5,570.6 611.5,570.7 612.5,570.5 613.5,570.8 614.5,571.0 615.5,570.3 616.5,570.8 617.5,570.9 618.5,570.5 619.5,570.6 620.5,571.1 621.5,570.1 622.5,570.6 623.5,570.3 624.5,570.9 625.5,571.0 626.5,570.6 627.5,570.2 628.5,570.7 629.4,570.6 630.4,570.8 631.4,570.6 632.4,570.7 633.4,570.9 634.4,570.6 635.4,570.5 636.4,571.0 637.4,570.3 638.4,570.8 639.4,570.5 640.4,570.9 641.4,570.1 642.4,570.8 643.4,570.1 644.4,569.7 645.4,569.8 646.4,569.8 647.4,569.3 648.4,569.6 649.4,569.4 650.5,569.6 651.5,569.1 652.5,568.9 653.5,568.8 654.5,569.1 655.5,569.2 656.5,568.7 657.5,568.3 658.5,568.7 659.5,568.2 660.5,567.8 661.5,567.6 662.5,568.0 663.5,567.9 664.5,567.5 665.5,567.2 666.5,567.1 667.5,566.6 668.5,567.1 669.6,566.3 670.6,566.4 671.6,566.4 672.6,566.2 673.6,565.7 674.6,565.3 675.6,565.4 676.6,564.8 677.6,565.3 678.6,564.7 679.6,565.1 680.6,564.5 681.6,564.5 682.6,564.4 683.6,564.5 684.6,564.2 685.6,564.0 686.6,564.6 687.6,564.2 688.7,564.1 689.7,564.1 690.7,564.2 691.7,564.1 692.7,564.3 693.7,564.2 694.7,563.9 695.7,564.4 696.7,564.3 697.7,563.5 698.7,564.0 699.7,563.9 700.7,563.5 701.7,562.6 702.8,563.1 703.8,562.7 704.8,561.9 705.8,561.6 706.8,562.3 707.8,561.8 708.8,561.2 709.8,560.8 710.9,560.6 711.9,560.5 712.9,560.8 713.9,560.2 714.9,559.8 715.9,560.3 716.8,560.0 717.8,559.2 718.7,559.8 719.6,559.3 720.6,559.3 721.5,559.0 722.5,559.1 723.5,558.9 724.4,558.9 725.4,558.2 726.3,558.7 727.3,558.5 728.2,558.6 729.2,558.3 730.2,558.7 731.1,558.3 732.1,558.0 733.0,557.9 734.0,557.7 735.0,558.3 736.0,558.0 737.1,558.6 738.1,558.5 739.1,559.0 740.1,559.2 741.2,559.4 742.2,559.9 743.2,559.2 744.2,560.2 745.3,560.0 746.3,560.3 747.3,560.6 748.3,560.7 749.3,560.2 750.3,560.2 751.3,560.6 752.4,559.7 753.4,560.2 754.4,560.2 755.4,559.5 756.4,560.0 757.4,560.1 758.4,560.2 759.4,559.6 760.5,560.2 761.5,559.7 762.5,559.6 763.5,560.0 764.5,559.0 765.5,559.7 766.6,559.5 767.6,559.2 768.6,559.6 769.6,559.1 770.7,559.1 771.7,559.1 772.7,559.4 773.7,558.9 774.7,559.2 775.7,559.2 776.6,559.4 777.6,559.7 778.6,559.3 779.6,559.8 780.6,559.5 781.6,559.6 782.6,559.4 783.6,559.7 784.6,560.2 785.6,560.0 786.5,560.2 787.5,559.8 788.5,559.8 789.5,559.8 790.5,560.2 791.5,560.3 792.5,560.5 793.5,559.8 794.5,560.5 795.5,560.7 796.4,560.4 797.4,560.0 798.4,560.3 799.4,560.1 800.4,560.3 801.4,561.0 802.4,560.7 803.4,560.8 804.4,560.9 805.3,561.1 806.3,560.8 807.3,560.8 808.3,560.8 809.3,560.9 810.3,560.8 811.3,560.9 812.3,560.5 813.3,561.0 814.2,560.8 815.2,561.1 816.2,560.4 817.2,560.5 818.2,560.4 819.2,561.2 820.2,561.3 821.2,561.1 822.2,560.8 823.1,561.3 824.1,561.2 825.1,561.0 826.1,560.7 827.1,560.8 828.1,561.1 829.0,561.2 830.0,561.5 830.9,561.9 831.9,562.4 832.9,561.7 833.8,562.4 834.8,562.1 835.7,562.3 836.7,563.2 837.6,563.2 838.6,563.7 839.6,563.4 840.6,563.2 841.7,563.8 842.7,564.2 843.7,564.7 844.7,564.9 845.7,564.6 846.8,564.8 847.8,564.6 848.8,565.4 849.8,565.1 850.8,565.3 851.9,565.3 852.9,565.5 853.9,566.4 854.9,565.9 855.9,566.9 857.0,566.1 858.0,567.0 859.0,566.4 860.0,566.4 861.1,567.2 862.1,566.9 863.1,567.5 864.1,567.0 865.2,567.0 866.2,567.9 867.2,567.9 868.2,568.1 869.2,568.0 870.2,567.3 871.2,567.9 872.2,568.0 873.1,567.8 874.1,568.3 875.1,567.6 876.1,568.3 877.1,568.1 878.1,567.4 879.1,567.5 880.1,568.1 881.1,568.3 882.0,567.6 883.0,567.8 884.0,568.3 885.0,567.7 886.0,568.4 887.0,568.1" fill="none" stroke="#c8c800" stroke-width="2.4" stroke-linejoin="round" shape-rendering="crispEdges"/>
<polyline points="54.2,342.0 54.2,339.0 54.2,336.0 54.3,333.0 54.3,330.0 54.3,327.0 54.3,324.0 54.4,321.0 54.4,318.0 54.4,315.0 54.4,312.0 54.4,309.0 54.5,306.0 54.5,303.0 54.5,300.0 54.7,297.3 54.8,294.7 55.0,292.0 55.1,288.9 55.3,285.7 55.4,282.6 55.6,279.4 55.7,276.3 55.9,273.1 56.0,270.0 56.4,266.8 56.7,263.5 57.0,260.2 57.4,257.0 58.3,254.2 59.3,251.3 60.2,248.5 61.1,246.6 62.1,244.6 63.0,242.7 64.0,241.7 64.9,240.7 65.9,239.6 66.9,238.6 67.8,237.6 68.8,236.6 69.8,236.2 70.7,235.7 71.7,234.9 72.7,234.8 73.6,234.5 74.6,234.0 75.5,233.8 76.5,232.8 77.5,233.2 78.4,232.5 79.3,232.5 80.3,232.2 81.2,231.7 82.2,231.3 83.2,231.5 84.1,231.3 85.0,230.9 86.0,230.4 87.0,229.9 87.9,229.6 88.9,230.3 89.8,229.9 90.8,229.9 91.8,229.2 92.7,229.4 93.7,229.6 94.6,229.3 95.6,228.9 96.6,228.5 97.7,228.5 98.7,228.8 99.7,228.2 100.8,228.4 101.8,228.2 102.9,228.4 103.9,228.2 104.9,227.5 106.0,227.1 107.0,227.3 108.0,227.4 109.0,227.5 110.0,227.7 111.0,227.7 112.0,226.8 113.0,227.6 114.0,227.5 115.0,227.6 116.0,227.2 117.0,226.9 118.0,227.4 119.0,227.3 120.0,227.2 121.0,227.4 122.0,226.8 123.0,226.6 124.0,227.1 125.0,227.3 126.0,226.7 127.0,227.3 128.0,227.4 129.0,226.7 130.0,227.1 131.0,227.2 132.0,227.0 133.0,226.7 134.0,226.8 135.0,227.3 136.0,227.3 137.0,227.0 138.0,226.7 139.0,227.5 140.0,227.5 141.0,227.0 142.0,227.4 143.0,227.8 144.0,227.8 145.0,227.5 146.0,227.5 147.0,227.7 148.0,227.3 149.0,227.4 150.0,227.4 151.0,228.0 152.0,227.7 153.0,227.9 154.0,227.8 155.0,228.0 156.0,227.6 157.0,227.6 158.0,228.6 159.0,228.0 160.0,227.8 161.0,228.3 162.0,228.5 163.0,227.9 164.0,228.4 165.0,228.2 166.0,228.4 167.0,228.0 167.9,228.1 168.9,229.1 169.9,229.1 170.9,228.8 171.8,229.0 172.8,228.7 173.8,229.3 174.8,229.1 175.8,229.7 176.7,229.6 177.7,229.7 178.7,229.9 179.7,229.3 180.8,229.1 181.8,229.3 182.8,229.3 183.8,229.3 184.8,229.3 185.8,229.9 186.9,230.2 187.9,229.9 188.9,230.4 189.9,230.4 190.9,229.7 191.9,230.2 193.0,230.1 194.0,229.9 195.0,230.8 196.0,230.1 197.0,230.5 198.0,230.7 199.0,231.1 199.9,230.9 200.9,230.7 201.9,230.9 202.9,230.7 203.9,231.6 204.9,231.7 205.9,231.0 206.9,230.9 207.8,231.2 208.8,231.4 209.8,232.0 210.8,232.1 211.8,232.1 212.8,231.4 213.8,232.3 214.8,232.3 215.8,232.3 216.7,232.7 217.7,231.9 218.7,232.1 219.7,232.8 220.7,233.0 221.7,232.9 222.7,232.7 223.8,233.1 224.8,233.4 225.8,232.9 226.8,233.2 227.8,233.3 228.9,233.3 229.9,233.8 230.9,233.6 231.9,233.8 233.0,233.9 234.0,234.5 235.0,234.0 236.0,235.0 237.0,234.7 238.0,234.8 239.0,236.0 240.0,235.6 241.0,236.5 242.0,236.7 243.0,237.0 244.0,236.5 245.0,237.1 246.0,237.0 247.0,238.1 248.0,238.3 249.0,238.4 250.0,238.5 251.0,238.4 251.9,239.0 252.9,238.8 253.9,239.0 254.9,238.6 255.8,238.8 256.8,238.8 257.8,239.5 258.8,239.5 259.8,239.1 260.7,240.0 261.7,239.5 262.7,239.9 263.8,239.8 264.8,240.2 265.8,241.0 266.8,240.8 267.9,240.8 268.9,241.4 269.9,241.5 270.9,242.3 272.0,241.8 273.0,242.9 274.0,242.3 274.9,243.6 275.9,243.7 276.8,243.6 277.8,244.3 278.8,244.5 279.7,244.8 280.7,245.1 281.6,245.7 282.6,246.7 283.6,246.4 284.5,246.1 285.5,245.0 286.4,245.0 287.4,245.3 288.4,244.3 289.3,244.7 290.3,244.0 291.2,244.4 292.2,243.2 293.2,243.8 294.3,243.2 295.3,242.8 296.4,242.4 297.4,243.1 298.5,242.6 299.6,242.1 300.6,242.1 301.6,242.4 302.7,241.5 303.7,242.1 304.6,241.9 305.6,242.1 306.5,242.9 307.5,243.1 308.4,242.8 309.4,242.9 310.3,243.1 311.3,243.8 312.2,244.0 313.2,244.2 314.2,244.4 315.1,245.2 316.1,245.6 317.0,246.1 317.9,246.2 318.9,246.1 319.9,246.3 320.8,247.3 321.8,247.2 322.7,247.7 323.7,247.2 324.6,248.1 325.6,247.8 326.6,248.5 327.5,248.7 328.5,248.5 329.5,248.2 330.5,249.2 331.5,248.9 332.5,249.5 333.6,249.0 334.6,249.1 335.6,249.9 336.6,249.5 337.6,249.5 338.6,249.8 339.6,250.2 340.6,249.8 341.7,250.4 342.7,250.5 343.7,250.7 344.7,250.5 345.7,251.2 346.7,251.5 347.8,251.7 348.8,251.3 349.8,251.8 350.8,251.7 351.9,252.2 352.9,251.6 353.9,252.6 354.9,252.8 356.0,252.5 357.0,252.7 358.0,252.9 358.9,253.0 359.9,252.7 360.9,253.8 361.9,253.2 362.8,253.3 363.8,253.4 364.8,253.7 365.7,254.4 366.7,253.7 367.6,253.6 368.6,253.9 369.6,253.2 370.5,252.8 371.4,253.1 372.4,252.9 373.3,252.6 374.3,252.6 375.2,251.7 376.2,252.3 377.2,251.9 378.1,250.9 379.1,250.8 380.0,250.9 381.0,250.7 381.9,250.2 382.9,249.8 383.9,249.8 384.8,249.3 385.8,249.5 386.7,249.5 387.7,248.5 388.6,249.0 389.6,249.2 390.6,248.6 391.5,249.3 392.4,249.4 393.4,248.9 394.4,248.9 395.3,249.3 396.3,249.3 397.2,249.3 398.2,250.1 399.1,250.2 400.1,250.0 401.1,250.1 402.0,250.4 403.0,250.7 403.9,251.5 404.9,251.6 405.8,251.9 406.8,252.0 407.8,252.2 408.9,251.5 409.9,252.0 410.9,252.6 412.0,252.7 413.0,252.1 414.1,252.4 415.1,252.7 416.1,252.5 417.2,252.8 418.2,252.5 419.2,252.9 420.3,253.1 421.3,252.7 422.3,252.9 423.4,253.8 424.4,253.7 425.4,253.9 426.4,253.7 427.5,254.0 428.5,254.1 429.5,254.2 430.6,253.4 431.6,254.1 432.6,253.7 433.7,254.1 434.7,253.6 435.7,253.9 436.8,254.2 437.8,253.8 438.8,253.4 439.8,253.7 440.9,253.5 441.9,254.0 442.9,253.3 444.0,253.3 445.0,253.5 446.0,253.0 447.0,253.5 448.0,253.9 449.0,253.5 450.0,253.2 451.0,253.4 452.0,253.5 453.0,253.1 454.0,253.1 455.0,253.1 456.0,253.3 457.0,253.4 458.0,253.3 459.0,253.3 460.0,253.1 461.0,253.6 462.0,253.9 463.0,253.7 464.0,253.7 465.0,253.8 465.9,253.3 466.9,253.8 467.8,253.6 468.8,253.6 469.7,253.7 470.7,253.6 471.7,253.5 472.7,253.6 473.7,253.7 474.7,254.1 475.7,254.1 476.7,254.4 477.7,254.0 478.7,254.5 479.7,255.1 480.7,254.6 481.6,255.1 482.6,255.1 483.6,255.0 484.6,255.9 485.6,255.3 486.6,255.9 487.6,255.4 488.6,255.5 489.6,256.4 490.6,256.1 491.6,255.8 492.6,256.3 493.6,256.5 494.6,257.0 495.6,256.6 496.6,256.9 497.6,257.8 498.6,257.7 499.6,257.3 500.6,257.7 501.6,257.9 502.7,258.4 503.7,258.5 504.7,259.0 505.7,259.1 506.7,259.0 507.7,259.4 508.7,259.6 509.7,259.8 510.7,259.7 511.7,260.2 512.7,260.3 513.7,260.6 514.7,260.0 515.7,260.9 516.7,260.1 517.7,261.0 518.7,261.0 519.7,261.1 520.7,261.7 521.8,261.4 522.8,261.4 523.8,262.0 524.8,262.2 525.8,262.1 526.8,262.0 527.8,262.2 528.8,262.4 529.8,262.8 530.8,262.5 531.8,262.8 532.8,263.2 533.8,263.3 534.8,263.5 535.8,264.2 536.8,264.5 537.8,264.3 538.8,264.5 539.8,264.5 540.8,264.9 541.8,264.9 542.8,265.6 543.8,265.8 544.8,265.6 545.8,266.6 546.8,266.3 547.8,267.0 548.8,267.3 549.8,267.6 550.8,267.1 551.8,267.6 552.8,268.3 553.8,267.6 554.8,267.9 555.8,268.6 556.8,268.8 557.8,269.4 558.8,269.5 559.8,269.5 560.8,270.1 561.8,269.9 562.8,270.1 563.9,270.5 564.9,270.4 565.9,270.6 566.9,271.1 567.9,271.0 568.9,271.9 569.9,271.8 570.9,271.9 571.9,271.7 572.9,272.2 573.9,272.4 574.9,272.8 575.9,273.0 576.9,273.6 577.9,273.9 578.9,273.6 579.9,273.8 580.9,274.2 581.9,274.8 582.9,274.3 583.8,274.7 584.8,275.2 585.8,274.8 586.8,275.2 587.8,276.1 588.8,276.1 589.8,276.0 590.8,275.8 591.8,276.8 592.8,276.9 593.8,277.2 594.8,277.6 595.8,277.7 596.8,277.4 597.8,277.4 598.8,277.7 599.8,278.1 600.8,278.3 601.8,278.2 602.8,278.4 603.8,279.0 604.8,279.2 605.8,279.2 606.8,280.0 607.8,279.8 608.8,279.4 609.8,280.0 610.8,280.6 611.8,280.3 612.8,280.9 613.8,280.4 614.8,280.9 615.8,281.6 616.8,281.6 617.8,281.9 618.8,281.6 619.8,282.1 620.8,282.4 621.8,282.3 622.8,282.9 623.8,283.0 624.8,283.7 625.8,283.5 626.8,283.5 627.8,283.4 628.8,283.7 629.8,284.5 630.8,284.0 631.8,284.3 632.8,284.5 633.8,285.1 634.8,285.6 635.8,285.6 636.8,286.0 637.8,285.5 638.9,285.7 639.9,286.7 640.9,286.5 641.9,287.1 643.0,287.0 644.0,287.1 645.0,287.4 646.1,287.5 647.1,288.5 648.1,288.5 649.1,288.5 650.2,288.8 651.2,289.0 652.2,289.1 653.2,290.3 654.3,290.4 655.3,291.2 656.3,291.0 657.3,291.6 658.4,291.6 659.4,291.8 660.4,293.1 661.4,293.5 662.5,293.3 663.5,294.3 664.5,294.6 665.5,294.3 666.4,294.8 667.4,295.4 668.3,295.1 669.3,295.8 670.3,295.3 671.2,295.7 672.2,296.2 673.1,295.9 674.1,296.2 675.1,296.9 676.1,296.6 677.1,297.1 678.1,296.7 679.0,296.7 680.0,297.0 681.0,297.0 682.0,297.9 683.0,297.4 684.0,297.8 685.0,297.4 686.0,298.0 687.0,298.0 688.0,298.1 689.1,297.9 690.1,298.1 691.1,299.0 692.1,298.6 693.1,298.6 694.1,298.9 695.2,299.2 696.2,299.4 697.2,299.5 698.3,300.4 699.3,300.3 700.3,300.4 701.3,301.2 702.4,300.8 703.4,301.3 704.4,302.1 705.5,301.7 706.5,302.2 707.5,302.8 708.4,303.0 709.4,302.5 710.3,302.9 711.2,303.5 712.2,303.3 713.1,304.1 714.1,303.5 715.0,304.5 716.0,304.2 717.0,303.9 718.0,304.2 719.0,303.8 720.0,304.4 721.1,304.0 722.1,304.6 723.1,304.3 724.1,304.1 725.1,303.9 726.1,304.3 727.1,303.9 728.1,304.6 729.2,303.8 730.2,304.2 731.2,304.2 732.2,304.0 733.2,304.5 734.2,303.8 735.1,303.9 736.0,303.6 737.0,303.1 738.0,302.9 738.9,302.4 739.8,302.2 740.8,302.7 741.8,302.1 742.7,302.4 743.7,301.8 744.6,302.2 745.6,302.0 746.6,302.1 747.5,301.8 748.5,301.5 749.4,301.8 750.4,301.6 751.4,301.7 752.3,302.4 753.3,302.1 754.2,302.4 755.2,303.0 756.1,303.0 757.1,303.3 758.1,303.4 759.0,302.8 760.0,303.1 760.9,303.0 761.9,303.8 762.9,303.8 763.9,303.6 764.9,303.7 766.0,304.0 767.0,304.1 768.0,303.7 769.0,304.4 770.0,304.0 771.0,304.3 772.0,303.9 773.0,303.9 774.1,304.8 775.1,304.7 776.1,304.7 777.1,304.1 778.1,304.2 779.1,304.3 780.1,304.4 781.1,304.5 782.1,304.6 783.1,304.3 784.0,304.6 785.0,305.0 786.0,304.6 787.0,305.3 788.0,305.0 789.0,305.2 790.0,304.8 791.0,305.0 792.0,305.3 793.0,305.0 794.0,304.7 795.0,305.5 796.0,305.5 797.0,305.1 797.9,304.8 798.9,305.7 799.9,305.5 800.9,304.9 801.9,305.2 802.9,305.1 803.9,305.8 804.9,305.3 805.9,306.1 807.0,306.0 808.0,305.4 809.0,306.1 810.0,305.9 811.1,306.3 812.1,306.4 813.1,306.0 814.1,305.9 815.2,306.8 816.2,306.3 817.2,306.9 818.2,306.7 819.2,306.8 820.3,306.9 821.3,306.7 822.3,306.6 823.3,306.2 824.3,306.8 825.4,306.6 826.4,306.7 827.4,307.1 828.4,306.1 829.4,306.5 830.4,305.6 831.4,306.1 832.3,306.0 833.3,305.2 834.3,305.3 835.3,305.5 836.3,304.9 837.3,304.9 838.3,304.6 839.3,304.4 840.3,304.7 841.3,304.8 842.3,304.6 843.3,304.7 844.3,304.6 845.3,305.2 846.3,305.1 847.3,304.7 848.3,304.7 849.2,305.0 850.2,305.0 851.2,305.5 852.2,304.9 853.2,304.9 854.2,305.5 855.2,304.7 856.2,305.2 857.2,305.0 858.2,305.5 859.2,305.2 860.2,305.4 861.2,304.9 862.2,305.5 863.2,305.5 864.3,305.5 865.3,305.9 866.3,306.1 867.3,305.5 868.4,305.8 869.4,306.0 870.4,305.9 871.4,305.9 872.5,306.3 873.5,306.3 874.5,306.9 875.5,306.7 876.6,306.5 877.6,306.7 878.7,307.0 879.7,306.9 880.8,306.8 881.8,306.8 882.8,306.8 883.9,307.9 884.9,307.7 886.0,307.1 887.0,307.6" fill="none" stroke="#008c00" stroke-width="2.4" stroke-linejoin="round" shape-rendering="crispEdges"/>
<g fill="#0000c8" shape-rendering="crispEdges"><rect x="54" y="469" width="2" height="4"/><rect x="55" y="467" width="2" height="3"/><rect x="56" y="466" width="3" height="2"/><rect x="58" y="465" width="381" height="2"/><rect x="439" y="464" width="233" height="2"/><rect x="672" y="465" width="178" height="2"/><rect x="850" y="464" width="37" height="2"/></g>
<polyline points="55.0,322.0 55.0,325.0 55.0,328.0 55.0,331.0 55.0,334.0 55.0,337.0 55.0,340.0 55.0,343.1 55.1,346.1 55.1,349.1 55.1,352.2 55.1,355.2 55.2,358.3 55.2,361.4 55.2,364.4 55.3,367.4 55.3,370.5 55.5,373.4 55.7,376.3 56.0,379.2 56.2,382.2 56.4,385.1 56.6,388.0 57.0,390.9 57.4,393.9 57.8,396.9 58.2,399.8 58.6,402.8 59.0,405.7 60.0,408.8 60.9,411.9 61.8,415.1 62.8,418.2 63.8,420.1 64.9,422.0 65.9,423.9 67.0,425.7 68.0,427.6 69.1,429.5 70.0,430.7 71.0,432.0 72.0,432.6 72.9,433.2 73.8,434.6 74.8,435.5 75.8,436.3 76.7,437.6 77.7,437.9 78.7,439.7 79.7,440.2 80.7,441.0 81.7,442.2 82.7,442.7 83.7,443.2 84.7,444.0 85.7,444.7 86.7,445.4 87.7,446.7 88.7,447.4 89.6,447.4 90.6,447.8 91.6,448.8 92.6,449.6 93.5,450.2 94.5,450.0 95.5,451.2 96.5,451.8 97.6,452.3 98.6,452.4 99.6,452.9 100.6,454.1 101.7,454.2 102.7,454.8 103.7,455.5 104.7,455.9 105.8,457.0 106.8,456.9 107.8,457.2 108.7,458.2 109.7,458.7 110.7,459.3 111.6,459.6 112.6,460.3 113.6,460.8 114.6,460.8 115.5,461.2 116.5,461.3 117.5,461.9 118.4,462.6 119.4,462.6 120.4,463.6 121.4,463.4 122.3,464.1 123.3,465.0 124.3,464.5 125.3,464.8 126.2,465.5 127.2,465.7 128.2,466.6 129.2,466.2 130.2,467.4 131.1,467.8 132.1,468.1 133.1,468.1 134.1,468.4 135.0,469.1 136.0,469.3 137.0,469.6 138.0,470.0 139.0,470.6 140.0,471.2 141.0,471.9 142.0,472.4 143.0,472.1 144.0,472.7 145.0,473.2 146.0,473.8 147.0,474.0 148.0,474.2 149.0,474.5 150.0,475.2 151.0,475.7 152.0,476.6 153.0,477.0 154.1,477.3 155.1,477.8 156.1,478.2 157.1,478.3 158.1,478.9 159.1,478.5 160.1,479.6 161.1,479.9 162.1,480.0 163.1,480.7 164.1,481.4 165.1,481.3 166.2,481.9 167.2,481.9 168.2,482.3 169.2,483.3 170.2,482.8 171.3,483.3 172.3,484.2 173.3,484.3 174.3,484.4 175.3,485.3 176.4,485.4 177.4,486.0 178.4,486.2 179.4,486.6 180.4,486.9 181.4,487.0 182.4,487.0 183.5,487.4 184.5,488.4 185.5,488.3 186.5,488.2 187.5,489.2 188.5,488.9 189.5,489.0 190.5,489.7 191.6,489.7 192.6,490.2 193.6,490.6 194.6,490.5 195.6,491.2 196.6,491.1 197.6,491.9 198.6,492.3 199.6,492.2 200.6,492.9 201.6,493.0 202.5,493.7 203.5,494.5 204.5,494.6 205.5,495.1 206.5,495.5 207.5,495.3 208.5,496.5 209.5,496.6 210.5,496.4 211.5,497.5 212.5,497.5 213.5,497.6 214.4,498.8 215.4,498.8 216.4,499.4 217.4,499.1 218.4,500.1 219.4,499.8 220.4,500.3 221.4,500.9 222.4,500.9 223.4,501.9 224.4,501.9 225.4,502.4 226.4,503.2 227.4,503.4 228.4,504.2 229.4,504.4 230.5,505.0 231.5,505.1 232.5,505.9 233.5,506.2 234.5,505.9 235.5,506.9 236.5,506.9 237.5,507.8 238.5,508.1 239.5,508.6 240.5,508.2 241.5,508.7 242.5,509.4 243.5,509.9 244.6,509.9 245.6,509.5 246.6,510.3 247.6,510.1 248.6,510.8 249.6,511.4 250.6,511.0 251.6,512.0 252.7,512.1 253.7,511.9 254.7,512.1 255.7,512.7 256.7,513.3 257.7,513.5 258.6,513.4 259.6,513.7 260.5,514.1 261.5,515.2 262.5,515.0 263.6,515.9 264.6,516.0 265.6,516.9 266.7,517.0 267.7,517.2 268.7,518.4 269.8,518.5 270.8,519.1 271.8,519.7 272.9,520.3 273.9,519.8 274.8,520.4 275.8,520.4 276.8,521.0 277.7,521.5 278.7,521.7 279.6,521.1 280.6,521.0 281.5,521.4 282.4,521.1 283.4,520.5 284.4,520.4 285.3,519.8 286.2,520.3 287.2,519.6 288.2,520.2 289.1,520.1 290.1,519.7 291.0,520.0 292.0,520.1 293.0,520.9 293.9,520.7 294.9,520.3 295.8,520.5 296.8,520.9 297.8,521.6 298.7,522.4 299.6,522.9 300.6,523.6 301.6,523.9 302.5,525.1 303.4,525.6 304.4,525.9 305.4,527.0 306.3,528.1 307.3,527.7 308.2,528.4 309.2,529.6 310.2,529.8 311.1,530.4 312.1,531.2 313.1,531.1 314.1,531.6 315.1,531.8 316.2,532.4 317.2,532.6 318.2,531.8 319.2,532.5 320.2,532.9 321.2,533.1 322.2,533.2 323.2,533.3 324.2,533.4 325.3,533.3 326.3,533.4 327.3,534.1 328.3,534.4 329.3,534.7 330.3,534.6 331.3,534.5 332.4,535.1 333.4,535.3 334.4,535.3 335.4,535.7 336.4,535.6 337.4,536.0 338.4,536.1 339.4,536.0 340.4,536.5 341.5,536.7 342.5,537.6 343.5,537.3 344.5,537.4 345.5,537.5 346.4,537.7 347.4,538.0 348.3,538.1 349.3,538.2 350.3,539.3 351.2,539.1 352.2,539.3 353.1,539.6 354.1,539.6 355.0,539.5 356.0,539.4 356.9,539.7 357.9,539.8 358.8,540.2 359.7,540.1 360.7,540.5 361.6,539.9 362.6,540.3 363.5,539.8 364.5,539.0 365.5,538.9 366.4,539.1 367.4,539.3 368.3,538.7 369.3,539.2 370.2,538.8 371.2,539.3 372.1,538.6 373.1,539.0 374.0,539.5 375.0,538.9 375.9,538.9 376.9,538.7 377.9,539.2 378.8,539.7 379.8,540.5 380.7,540.4 381.7,541.0 382.7,541.2 383.6,542.0 384.6,542.6 385.5,542.8 386.5,542.7 387.5,543.8 388.6,544.7 389.6,544.9 390.6,545.0 391.7,546.4 392.7,547.0 393.8,547.1 394.8,547.5 395.8,548.2 396.9,549.1 397.9,550.1 398.9,550.1 400.0,550.6 401.0,550.1 402.0,550.4 403.1,551.0 404.1,551.1 405.1,551.1 406.1,551.6 407.2,551.5 408.2,551.4 409.2,552.0 410.3,551.8 411.3,552.6 412.3,552.6 413.3,552.9 414.3,553.3 415.3,553.1 416.3,553.6 417.3,553.3 418.3,554.5 419.3,554.3 420.3,555.0 421.4,554.3 422.4,555.0 423.4,555.4 424.4,555.2 425.4,555.2 426.4,555.5 427.4,555.7 428.4,556.5 429.4,556.1 430.4,557.0 431.4,556.9 432.4,557.2 433.4,557.5 434.4,557.7 435.4,558.0 436.4,558.2 437.4,558.2 438.4,558.8 439.4,558.5 440.5,559.2 441.5,559.5 442.5,559.8 443.5,559.5 444.5,560.2 445.5,560.7 446.5,560.4 447.5,560.4 448.5,560.9 449.5,561.5 450.5,561.1 451.6,561.3 452.6,562.2 453.6,562.7 454.7,563.2 455.7,563.2 456.7,564.2 457.7,563.8 458.8,564.7 459.8,564.4 460.8,564.7 461.9,565.2 462.9,565.5 463.9,566.3 464.8,566.8 465.8,566.8 466.7,568.0 467.7,567.9 468.6,568.1 469.6,568.5 470.5,569.5 471.5,570.1 472.5,569.8 473.6,570.0 474.6,571.2 475.6,571.0 476.7,572.2 477.7,572.1 478.7,572.6 479.8,572.7 480.8,573.6 481.8,573.7 482.9,573.9 483.9,574.9 484.9,574.4 485.9,575.3 486.9,575.0 487.8,575.8 488.8,575.9 489.8,576.6 490.8,576.1 491.8,576.9 492.8,577.1 493.8,577.9 494.7,578.2 495.7,578.2 496.7,578.1 497.7,578.4 498.7,578.7 499.7,579.2 500.7,579.3 501.7,579.5 502.6,580.4 503.6,580.6 504.6,580.5 505.6,581.5 506.6,581.0 507.6,581.7 508.6,581.6 509.5,582.6 510.5,582.9 511.5,582.6 512.5,583.4 513.5,583.8 514.5,583.5 515.5,583.9 516.5,584.4 517.5,585.1 518.5,584.7 519.5,585.6 520.5,585.8 521.5,586.0 522.5,586.5 523.5,587.1 524.4,586.8 525.4,587.8 526.4,587.6 527.4,588.3 528.4,588.8 529.4,588.4 530.4,589.4 531.4,589.9 532.4,589.5 533.4,589.6 534.4,590.0 535.4,591.2 536.4,590.5 537.4,591.7 538.4,591.3 539.4,592.1 540.4,591.8 541.4,592.2 542.4,593.0 543.4,592.7 544.4,593.2 545.5,594.1 546.5,594.2 547.5,594.7 548.5,595.1 549.5,594.4 550.5,594.9 551.5,595.8 552.5,596.0 553.5,595.6 554.5,596.4 555.5,596.4 556.4,596.9 557.4,596.8 558.3,597.0 559.2,598.3 560.2,597.9 561.1,598.7 562.1,598.3 563.0,598.9 564.0,598.8 565.0,599.4 566.0,599.4 567.0,600.1 568.0,599.9 569.0,600.7 570.0,600.7 571.0,600.6 572.0,601.1 573.0,601.5 574.1,602.1 575.1,601.8 576.1,601.9 577.1,603.0 578.1,603.1 579.1,603.2 580.1,603.0 581.1,603.2 582.1,603.5 583.1,603.6 584.1,603.7 585.1,604.4 586.1,604.5 587.1,604.9 588.1,604.9 589.1,604.7 590.1,605.6 591.1,605.8 592.1,605.8 593.2,606.0 594.2,606.4 595.2,606.9 596.2,607.0 597.2,607.0 598.2,606.9 599.2,607.0 600.2,607.3 601.2,608.1 602.2,607.7 603.2,607.9 604.2,608.1 605.2,608.0 606.2,609.1 607.2,608.3 608.2,609.1 609.2,609.6 610.2,609.2 611.2,609.7 612.3,609.7 613.3,609.7 614.3,609.9 615.3,610.0 616.3,610.9 617.3,611.1 618.3,611.4 619.3,610.7 620.3,611.6 621.3,611.4 622.3,612.0 623.3,612.2 624.3,612.2 625.3,613.1 626.3,612.4 627.3,613.4 628.3,613.7 629.3,613.6 630.3,614.0 631.4,614.6 632.4,614.1 633.4,614.8 634.4,615.1 635.4,615.0 636.4,615.6 637.4,615.5 638.4,615.9 639.4,616.3 640.4,616.6 641.4,616.4 642.4,616.8 643.4,616.9 644.4,616.7 645.4,617.3 646.4,617.1 647.4,617.9 648.4,617.6 649.4,618.0 650.5,617.9 651.5,618.1 652.5,618.0 653.5,618.0 654.5,619.0 655.5,618.7 656.5,618.9 657.5,619.0 658.5,619.5 659.5,619.0 660.5,619.0 661.5,619.6 662.5,619.2 663.5,619.4 664.5,619.5 665.5,619.6 666.5,619.5 667.5,618.7 668.5,619.0 669.6,619.4 670.6,619.4 671.6,618.7 672.6,618.7 673.6,618.8 674.6,618.6 675.6,618.8 676.6,619.2 677.6,618.9 678.6,618.9 679.6,618.5 680.5,618.8 681.5,619.3 682.4,619.0 683.4,618.8 684.4,618.8 685.3,619.1 686.3,619.0 687.2,618.4 688.2,618.9 689.1,618.6 690.1,618.7 691.1,618.8 692.0,619.2 693.0,619.5 693.9,619.8 694.9,619.8 695.8,620.3 696.8,621.0 697.7,620.8 698.7,620.9 699.6,621.5 700.5,621.2 701.5,621.3 702.5,621.3 703.4,621.9 704.3,621.2 705.3,621.8 706.3,621.8 707.2,620.8 708.2,620.8 709.1,620.9 710.1,620.4 711.0,619.9 712.0,619.3 713.0,619.4 713.9,619.0 714.9,619.1 715.8,618.4 716.8,618.2 717.8,618.3 718.9,618.3 719.9,617.6 720.9,617.5 722.0,617.5 723.0,617.7 724.1,616.8 725.1,617.4 726.1,617.0 727.2,616.4 728.2,616.6 729.2,616.2 730.1,616.0 731.1,616.7 732.0,616.3 733.0,616.4 734.0,616.4 734.9,616.8 735.9,616.7 736.8,615.9 737.8,616.5 738.7,616.4 739.7,616.4 740.7,616.8 741.7,616.5 742.8,616.7 743.8,617.2 744.8,616.8 745.8,617.0 746.8,617.1 747.9,617.5 748.9,617.5 749.9,617.6 750.9,617.4 751.9,617.1 753.0,617.9 754.0,617.9 755.0,618.2 756.0,618.2 757.0,617.5 758.0,617.7 759.0,617.5 760.0,618.3 761.0,617.6 762.0,617.6 763.0,618.3 764.0,618.1 765.0,617.6 766.0,618.2 767.0,618.3 768.0,618.1 769.0,617.6 770.0,618.3 771.1,618.0 772.1,618.2 773.1,618.6 774.1,618.5 775.1,618.5 776.1,617.8 777.1,618.0 778.1,618.2 779.1,617.7 780.1,618.7 781.1,618.0 782.1,618.0 783.1,618.1 784.1,618.0 785.1,618.7 786.1,618.6 787.0,618.8 788.0,619.0 788.9,618.9 789.9,619.4 790.9,620.3 791.8,620.5 792.8,620.8 793.7,620.5 794.7,620.7 795.6,620.8 796.6,621.5 797.6,621.6 798.6,621.8 799.7,622.1 800.7,622.4 801.7,622.3 802.7,623.0 803.8,622.5 804.8,623.5 805.8,623.3 806.8,623.0 807.9,623.4 808.9,623.8 809.9,623.9 810.9,624.1 811.9,623.9 812.9,623.9 813.9,624.5 814.9,624.0 815.9,624.5 816.9,624.6 817.9,624.5 818.9,624.4 819.9,624.9 821.0,624.5 822.0,624.9 823.0,624.2 824.0,624.6 825.0,624.9 826.0,624.3 827.0,625.2 828.0,624.4 829.0,625.0 830.0,624.6 831.0,625.4 832.0,625.4 833.1,626.0 834.1,626.0 835.1,626.6 836.2,626.9 837.2,626.9 838.3,627.1 839.3,628.1 840.3,627.8 841.4,628.9 842.4,628.5 843.4,628.8 844.4,629.3 845.5,630.4 846.5,631.0 847.5,630.9 848.5,631.6 849.5,631.7 850.6,632.8 851.6,633.0 852.6,632.9 853.6,633.3 854.6,634.4 855.7,634.1 856.7,635.4 857.7,635.3 858.7,635.5 859.7,636.1 860.8,636.1 861.8,636.6 862.8,636.4 863.8,637.4 864.8,637.1 865.9,637.9 866.9,637.4 867.9,638.3 868.9,638.8 869.9,638.4 871.0,638.3 872.0,638.9 873.0,639.4 874.0,639.3 875.0,639.8 876.0,639.6 877.0,640.2 878.0,640.7 879.0,640.7 880.0,641.2 881.0,640.9 882.0,641.8 883.0,641.4 884.0,642.4 885.0,642.7 886.0,642.9 887.0,642.7" fill="none" stroke="#c800c8" stroke-width="2.4" stroke-linejoin="round" shape-rendering="crispEdges"/>
<rect x="933" y="92" width="211" height="20" fill="#bedcf0" shape-rendering="crispEdges"/>
<rect x="933" y="110" width="211" height="2" fill="#8a8a8a" shape-rendering="crispEdges"/>
<rect x="933" y="92" width="211" height="1" fill="#eef6fb" opacity="0.8" shape-rendering="crispEdges"/>
<rect x="933" y="92" width="1" height="19" fill="#f4f8fb" opacity="0.8" shape-rendering="crispEdges"/>
<text class="mono" x="940" y="108" font-size="14" font-weight="bold" textLength="88.5" lengthAdjust="spacingAndGlyphs" xml:space="preserve">Average= 4</text>
<rect x="933" y="113" width="211" height="20" fill="#bedcf0" shape-rendering="crispEdges"/>
<rect x="933" y="131" width="211" height="2" fill="#8a8a8a" shape-rendering="crispEdges"/>
<rect x="933" y="113" width="211" height="1" fill="#eef6fb" opacity="0.8" shape-rendering="crispEdges"/>
<rect x="933" y="113" width="1" height="19" fill="#f4f8fb" opacity="0.8" shape-rendering="crispEdges"/>
<text class="mono" x="940" y="129" font-size="14" font-weight="bold" textLength="169.0" lengthAdjust="spacingAndGlyphs" xml:space="preserve">Settling Time= 2 ms</text>
<rect x="933" y="134" width="211" height="20" fill="#b0b0b0" shape-rendering="crispEdges"/>
<rect x="933" y="152" width="211" height="2" fill="#8a8a8a" shape-rendering="crispEdges"/>
<rect x="933" y="134" width="211" height="1" fill="#eef6fb" opacity="0.8" shape-rendering="crispEdges"/>
<rect x="933" y="134" width="1" height="19" fill="#f4f8fb" opacity="0.8" shape-rendering="crispEdges"/>
<text class="mono" x="940" y="150" font-size="14" font-weight="bold" textLength="70.6" lengthAdjust="spacingAndGlyphs" xml:space="preserve">Trend= 0</text>
<rect x="933" y="155" width="211" height="20" fill="#b0b0b0" shape-rendering="crispEdges"/>
<rect x="933" y="173" width="211" height="2" fill="#8a8a8a" shape-rendering="crispEdges"/>
<rect x="933" y="155" width="211" height="1" fill="#eef6fb" opacity="0.8" shape-rendering="crispEdges"/>
<rect x="933" y="155" width="1" height="19" fill="#f4f8fb" opacity="0.8" shape-rendering="crispEdges"/>
<text class="mono" x="940" y="171" font-size="14" font-weight="bold" textLength="178.0" lengthAdjust="spacingAndGlyphs" xml:space="preserve">Line Extension= 0 cm</text>
<rect x="933" y="176" width="211" height="20" fill="#bedcf0" shape-rendering="crispEdges"/>
<rect x="933" y="194" width="211" height="2" fill="#8a8a8a" shape-rendering="crispEdges"/>
<rect x="933" y="176" width="211" height="1" fill="#eef6fb" opacity="0.8" shape-rendering="crispEdges"/>
<rect x="933" y="176" width="1" height="19" fill="#f4f8fb" opacity="0.8" shape-rendering="crispEdges"/>
<text class="mono" x="940" y="192" font-size="14" font-weight="bold" textLength="52.7" lengthAdjust="spacingAndGlyphs" xml:space="preserve">Zo= 50</text>
<text x="938.0" y="239.0" fill="#009000" font-size="12" font-weight="bold" textLength="157.9" lengthAdjust="spacingAndGlyphs" xml:space="preserve">Driver Amplitude = 100%</text>
<text x="938.0" y="255.0" fill="#ff0000" font-size="12" font-weight="bold" textLength="105.4" lengthAdjust="spacingAndGlyphs" xml:space="preserve">Freq = 92.79712</text>
<text x="938.0" y="281.0" fill="#000" font-size="12" font-weight="bold" textLength="129.8" lengthAdjust="spacingAndGlyphs" xml:space="preserve">Freq Step = 0.05000</text>
<text x="937.9" y="328.0" fill="#ff0000" font-size="12" font-weight="bold" textLength="99.6" lengthAdjust="spacingAndGlyphs" xml:space="preserve">SWR  =  12.043</text>
<text x="937.7" y="344.0" fill="#009000" font-size="12" font-weight="bold" textLength="109.4" lengthAdjust="spacingAndGlyphs" xml:space="preserve">Zmag =  404.259</text>
<text x="937.9" y="360.0" fill="#cc00cc" font-size="12" font-weight="bold" textLength="110.7" lengthAdjust="spacingAndGlyphs" xml:space="preserve">Phase =  -47.393</text>
<text x="937.9" y="376.0" fill="#000" font-size="12" font-weight="bold" textLength="124.4" lengthAdjust="spacingAndGlyphs" xml:space="preserve">% refl power = 71.7</text>
<text x="937.9" y="392.0" fill="#0000cc" font-size="12" font-weight="bold" textLength="144.6" lengthAdjust="spacingAndGlyphs" xml:space="preserve">Return Loss=  1.45 dB</text>
<text x="937.9" y="413.0" fill="#ff0000" font-size="12" font-weight="bold" textLength="122.5" lengthAdjust="spacingAndGlyphs" xml:space="preserve">Short/Open Circuit:</text>
<text x="945.9" y="429.0" fill="#000" font-size="12" font-weight="bold" textLength="139.6" lengthAdjust="spacingAndGlyphs" xml:space="preserve">Cable Loss=  0.72 dB</text>
<text x="937.9" y="455.0" fill="#009000" font-size="12" font-weight="bold" textLength="117.2" lengthAdjust="spacingAndGlyphs" xml:space="preserve">Equivalent Circuit:</text>
<text x="937.9" y="471.0" fill="#000" font-size="12" font-weight="bold" textLength="90.5" lengthAdjust="spacingAndGlyphs" xml:space="preserve">Rs =  273.669</text>
<text x="937.9" y="487.0" fill="#000" font-size="12" font-weight="bold" textLength="89.7" lengthAdjust="spacingAndGlyphs" xml:space="preserve">Xs = -297.542</text>
<text x="937.9" y="503.0" fill="#000" font-size="12" font-weight="bold" textLength="49.9" lengthAdjust="spacingAndGlyphs" xml:space="preserve">Q =  1.1</text>
<text x="937.9" y="519.0" fill="#000" font-size="12" font-weight="bold" textLength="107.0" lengthAdjust="spacingAndGlyphs" xml:space="preserve">Cs =    5.764  pF</text>
<text x="937.9" y="540.0" fill="#000" font-size="12" font-weight="bold" textLength="90.5" lengthAdjust="spacingAndGlyphs" xml:space="preserve">Rp =  597.166</text>
<text x="937.9" y="556.0" fill="#000" font-size="12" font-weight="bold" textLength="89.7" lengthAdjust="spacingAndGlyphs" xml:space="preserve">Xp = -549.253</text>
<text x="937.9" y="572.0" fill="#000" font-size="12" font-weight="bold" textLength="107.0" lengthAdjust="spacingAndGlyphs" xml:space="preserve">Cp =    3.123  pF</text>
<text x="933.1" y="781.0" fill="#c8000e" font-size="12" font-weight="bold" textLength="67.6" lengthAdjust="spacingAndGlyphs" xml:space="preserve">FILES:(542)</text>
<text x="938.0" y="796.0" fill="#009000" font-size="12" font-weight="bold" textLength="107.3" lengthAdjust="spacingAndGlyphs" xml:space="preserve">Cal 20130810.acal</text>
<text x="937.7" y="811.0" fill="#c8000e" font-size="12" font-weight="bold" textLength="105.2" lengthAdjust="spacingAndGlyphs" xml:space="preserve">_VNA_Default.cfg</text>
<circle cx="1101.6" cy="236.8" r="2" fill="#009000"/>
<text x="17.9" y="834.0" fill="#000" font-size="12" font-weight="bold" textLength="132.7" lengthAdjust="spacingAndGlyphs" xml:space="preserve">Aug 11, 13  00:25:00</text>
<text x="412.4" y="834.0" fill="#0000ff" font-size="12" font-weight="bold" textLength="114.2" lengthAdjust="spacingAndGlyphs" xml:space="preserve">S11 800 ohm end</text>
<rect x="8" y="844" width="1136" height="16" fill="#f0f0f0" shape-rendering="crispEdges"/>
<rect x="8" y="859" width="1136" height="1" fill="#a0a0a0" shape-rendering="crispEdges"/>
<rect x="8" y="860" width="1136" height="1" fill="#696969" shape-rendering="crispEdges"/>
<rect x="101" y="844" width="1" height="16" fill="#a0a0a0" shape-rendering="crispEdges"/><rect x="102" y="843" width="1" height="18" fill="#696969" shape-rendering="crispEdges"/><rect x="103" y="844" width="1" height="15" fill="#fff" shape-rendering="crispEdges"/>
<rect x="196" y="844" width="1" height="16" fill="#a0a0a0" shape-rendering="crispEdges"/><rect x="197" y="843" width="1" height="18" fill="#696969" shape-rendering="crispEdges"/><rect x="198" y="844" width="1" height="15" fill="#fff" shape-rendering="crispEdges"/>
<rect x="291" y="844" width="1" height="16" fill="#a0a0a0" shape-rendering="crispEdges"/><rect x="292" y="843" width="1" height="18" fill="#696969" shape-rendering="crispEdges"/><rect x="293" y="844" width="1" height="15" fill="#fff" shape-rendering="crispEdges"/>
<rect x="386" y="844" width="1" height="16" fill="#a0a0a0" shape-rendering="crispEdges"/><rect x="387" y="843" width="1" height="18" fill="#696969" shape-rendering="crispEdges"/><rect x="388" y="844" width="1" height="15" fill="#fff" shape-rendering="crispEdges"/>
<rect x="481" y="844" width="1" height="16" fill="#a0a0a0" shape-rendering="crispEdges"/><rect x="482" y="843" width="1" height="18" fill="#696969" shape-rendering="crispEdges"/><rect x="483" y="844" width="1" height="15" fill="#fff" shape-rendering="crispEdges"/>
<rect x="576" y="844" width="1" height="16" fill="#a0a0a0" shape-rendering="crispEdges"/><rect x="577" y="843" width="1" height="18" fill="#696969" shape-rendering="crispEdges"/><rect x="578" y="844" width="1" height="15" fill="#fff" shape-rendering="crispEdges"/>
<rect x="671" y="844" width="1" height="16" fill="#a0a0a0" shape-rendering="crispEdges"/><rect x="672" y="843" width="1" height="18" fill="#696969" shape-rendering="crispEdges"/><rect x="673" y="844" width="1" height="15" fill="#fff" shape-rendering="crispEdges"/>
<rect x="766" y="844" width="1" height="16" fill="#a0a0a0" shape-rendering="crispEdges"/><rect x="767" y="843" width="1" height="18" fill="#696969" shape-rendering="crispEdges"/><rect x="768" y="844" width="1" height="15" fill="#fff" shape-rendering="crispEdges"/>
<rect x="866" y="844" width="1" height="16" fill="#a0a0a0" shape-rendering="crispEdges"/><rect x="867" y="843" width="1" height="18" fill="#696969" shape-rendering="crispEdges"/><rect x="868" y="844" width="1" height="15" fill="#fff" shape-rendering="crispEdges"/>
<rect x="966" y="844" width="1" height="16" fill="#a0a0a0" shape-rendering="crispEdges"/><rect x="967" y="843" width="1" height="18" fill="#696969" shape-rendering="crispEdges"/><rect x="968" y="844" width="1" height="15" fill="#fff" shape-rendering="crispEdges"/>
<rect x="1061" y="844" width="1" height="16" fill="#a0a0a0" shape-rendering="crispEdges"/><rect x="1062" y="843" width="1" height="18" fill="#696969" shape-rendering="crispEdges"/><rect x="1063" y="844" width="1" height="15" fill="#fff" shape-rendering="crispEdges"/>
<text x="29.9" y="856.0" fill="#000" font-size="12" font-weight="bold" textLength="51.2" lengthAdjust="spacingAndGlyphs" xml:space="preserve">Port A/B</text>
<text x="128.6" y="856.0" fill="#000" font-size="12" font-weight="bold" textLength="44.6" lengthAdjust="spacingAndGlyphs" xml:space="preserve">Scan A</text>
<text x="214.7" y="856.0" fill="#000" font-size="12" font-weight="bold" textLength="61.9" lengthAdjust="spacingAndGlyphs" xml:space="preserve">Rescan A</text>
<text x="314.7" y="856.0" fill="#000" font-size="12" font-weight="bold" textLength="50.5" lengthAdjust="spacingAndGlyphs" xml:space="preserve">Recycle</text>
<text x="402.0" y="856.0" fill="#000" font-size="12" font-weight="bold" textLength="67.8" lengthAdjust="spacingAndGlyphs" xml:space="preserve">Point Data</text>
<text x="509.6" y="856.0" fill="#000" font-size="12" font-weight="bold" textLength="40.4" lengthAdjust="spacingAndGlyphs" xml:space="preserve">Limits</text>
<text x="602.7" y="856.0" fill="#000" font-size="12" font-weight="bold" textLength="44.6" lengthAdjust="spacingAndGlyphs" xml:space="preserve">Scales</text>
<text x="701.6" y="856.0" fill="#000" font-size="12" font-weight="bold" textLength="37.3" lengthAdjust="spacingAndGlyphs" xml:space="preserve">Smith</text>
<text x="787.2" y="856.0" fill="#000" font-size="12" font-weight="bold" textLength="63.3" lengthAdjust="spacingAndGlyphs" xml:space="preserve">Comment</text>
<text x="896.5" y="856.0" fill="#000" font-size="12" font-weight="bold" textLength="41.9" lengthAdjust="spacingAndGlyphs" xml:space="preserve">Status</text>
<text x="1002.1" y="856.0" fill="#000" font-size="12" font-weight="bold" textLength="27.2" lengthAdjust="spacingAndGlyphs" xml:space="preserve">Halt</text>
<text x="1096.9" y="856.0" fill="#000" font-size="12" font-weight="bold" textLength="27.2" lengthAdjust="spacingAndGlyphs" xml:space="preserve">Quit</text>
</svg></body></html>
